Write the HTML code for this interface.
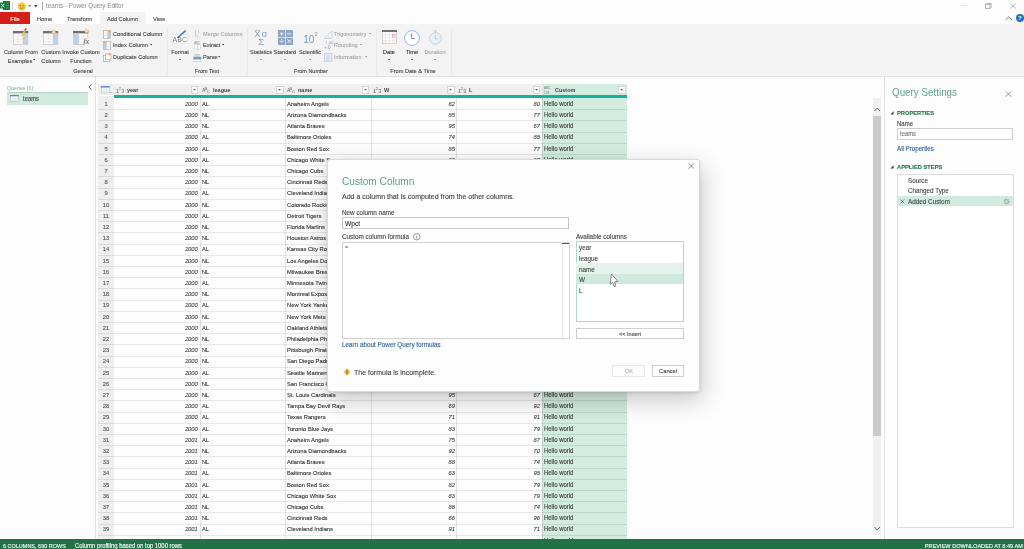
<!DOCTYPE html>
<html><head><meta charset="utf-8"><style>
html,body{margin:0;padding:0;width:1024px;height:549px;overflow:hidden;background:#fdfdfd}
body{position:relative;font-family:"Liberation Sans",sans-serif;-webkit-font-smoothing:antialiased}
#root{position:absolute;left:0;top:0;width:1024px;height:549px;will-change:transform}
div,span,svg{position:absolute}
.t{white-space:nowrap;display:block;-webkit-text-stroke:0.12px currentColor}
</style></head><body><div id="root">
<div style="left:0px;top:0px;width:1024px;height:12px;background:#fdfdfd"></div>
<svg style="position:absolute;left:0px;top:1px" width="10" height="9" viewBox="0 0 10 9"><rect x="3" y="0" width="7" height="9" fill="#1d6f42"/><rect x="0" y="1.5" width="5.5" height="6" fill="#107c41"/><path d="M1.2 2.8 L4.3 6.4 M4.3 2.8 L1.2 6.4" stroke="#fff" stroke-width="0.9"/><path d="M6 2h3M6 4.5h3M6 7h3" stroke="#5fb98a" stroke-width="0.6"/></svg>
<div style="left:11.5px;top:2px;width:0.6px;height:8px;background:#d6d6d6"></div>
<svg style="position:absolute;left:17px;top:2px" width="10" height="9" viewBox="0 0 10 9"><circle cx="4.8" cy="4.5" r="4.2" fill="#f5c842"/><circle cx="3.5" cy="3.6" r="0.6" fill="#6b5a1e"/><circle cx="6.2" cy="3.6" r="0.6" fill="#6b5a1e"/><path d="M3 5.8 Q4.8 7.2 6.6 5.8" stroke="#6b5a1e" stroke-width="0.6" fill="none"/></svg>
<svg style="position:absolute;left:27.5px;top:5px" width="3" height="2" viewBox="0 0 3 2"><path d="M0 0h3L1.5 2z" fill="#3a9a5a"/></svg>
<svg style="position:absolute;left:34px;top:5px" width="4" height="3" viewBox="0 0 4 3"><path d="M0 0h3.4L1.7 2.4z" fill="#444"/></svg>
<div style="left:42px;top:2px;width:0.7px;height:8px;background:#9aa9c0"></div>
<span class="t" style="left:46px;top:2.455px;font-size:6.3px;line-height:7px;color:#8c8c8c;-webkit-text-stroke:0;font-size:6.74px;transform:scaleX(0.9346);transform-origin:0 50%">teams - Power Query Editor</span>
<div style="left:961px;top:5px;width:6px;height:0.5px;background:#e2e2e2"></div>
<svg style="position:absolute;left:985px;top:3px" width="7" height="6" viewBox="0 0 7 6"><rect x="0.4" y="1.6" width="4.6" height="4" fill="none" stroke="#999" stroke-width="0.7"/><path d="M1.6 1.2V0.4H6.2V4.6H5.4" fill="none" stroke="#999" stroke-width="0.7"/></svg>
<svg style="position:absolute;left:1010px;top:3px" width="7" height="6" viewBox="0 0 7 6"><path d="M0.5 0.5L6 5.5M6 0.5L0.5 5.5" stroke="#999" stroke-width="0.7"/></svg>
<div style="left:0px;top:12px;width:1024px;height:12px;background:#fdfdfd"></div>
<div style="left:0px;top:12px;width:30px;height:12px;background:#d4201b"></div>
<span class="t" style="left:-85px;width:200px;text-align:center;top:14.722px;font-size:6.206px;line-height:7px;transform:scaleX(0.9346);transform-origin:50% 50%;color:#fff;">File</span>
<span class="t" style="left:37px;top:14.883px;font-size:6.099px;line-height:7px;transform:scaleX(0.9346);transform-origin:0 50%;color:#444;">Home</span>
<span class="t" style="left:67px;top:15.845px;font-size:5.992px;line-height:6px;transform:scaleX(0.9346);transform-origin:0 50%;color:#444;">Transform</span>
<div style="left:100px;top:12px;width:45.5px;height:13px;background:#f4f3f3"></div>
<span class="t" style="left:107px;top:15.864px;font-size:6.046px;line-height:6px;transform:scaleX(0.9346);transform-origin:0 50%;color:#444;">Add Column</span>
<span class="t" style="left:153px;top:14.883px;font-size:6.099px;line-height:7px;transform:scaleX(0.9346);transform-origin:0 50%;color:#444;">View</span>
<svg style="position:absolute;left:1005px;top:16px" width="8" height="5" viewBox="0 0 8 5"><path d="M0.5 4L3.8 0.8L7 4" fill="none" stroke="#666" stroke-width="0.8"/></svg>
<svg style="position:absolute;left:1016px;top:14px" width="8" height="8" viewBox="0 0 8 8"><circle cx="4" cy="4" r="4" fill="#1f6fbf"/><text x="4" y="6.3" font-size="6.2" text-anchor="middle" fill="#fff" font-family="Liberation Sans" font-weight="bold">?</text></svg>
<div style="left:0px;top:24px;width:1024px;height:52px;background:#f4f3f3"></div>
<div style="left:0px;top:75.5px;width:1024px;height:1px;background:#e4e2e0"></div>
<div style="left:166.5px;top:28px;width:0.6px;height:46px;background:#ebe9e7"></div>
<div style="left:247px;top:28px;width:0.6px;height:46px;background:#ebe9e7"></div>
<div style="left:376px;top:28px;width:0.6px;height:46px;background:#ebe9e7"></div>
<div style="left:450.5px;top:28px;width:0.6px;height:46px;background:#ebe9e7"></div>
<div style="left:98.5px;top:28px;width:0.6px;height:44px;background:#f3f2f1"></div>
<svg style="position:absolute;left:13.4px;top:27.8px" width="17" height="17" viewBox="0 0 17 17"><g transform="translate(0,3)"><rect x="0.35" y="0.35" width="14.5" height="13.2" fill="#fff" stroke="#b4b4b4" stroke-width="0.6"/><rect x="0" y="0" width="15.2" height="2.4" fill="#6f6f6f"/><rect x="10" y="2.4" width="4.85" height="11.15" fill="#bcd0e6"/><path d="M0.4 5.3H14.8M0.4 8.1H14.8M0.4 10.9H14.8M5.2 2.4V13.5M10 2.4V13.5" stroke="#d2d2d2" stroke-width="0.5"/></g><path d="M12.2 0.5 L8 8 L10.6 8 L7.2 13.5 L13.2 6.3 L10.8 6.3 L13.8 0.5z" fill="#f5c65a"/><path d="M12.2 0.5 L11 2.6 L13 2.6 L13.8 0.5z" fill="#e05050"/></svg>
<span class="t" style="left:-79px;width:200px;text-align:center;top:49.445px;font-size:5.992px;line-height:6px;transform:scaleX(0.9346);transform-origin:50% 50%;color:#444;">Column From</span>
<span class="t" style="left:-80.5px;width:200px;text-align:center;top:57.645px;font-size:5.992px;line-height:6px;transform:scaleX(0.9346);transform-origin:50% 50%;color:#444;">Examples</span>
<svg style="position:absolute;left:32.8px;top:59.2px" width="2.4" height="1.6" viewBox="0 0 2.4 1.6"><path d="M0 0h2.4L1.2 1.6z" fill="#444"/></svg>
<svg style="position:absolute;left:42.5px;top:27.8px" width="17" height="17" viewBox="0 0 17 17"><g transform="translate(0,3)"><rect x="0.35" y="0.35" width="14.5" height="13.2" fill="#fff" stroke="#b4b4b4" stroke-width="0.6"/><rect x="0" y="0" width="15.2" height="2.4" fill="#6f6f6f"/><rect x="10" y="2.4" width="4.85" height="11.15" fill="#bcd0e6"/><path d="M0.4 5.3H14.8M0.4 8.1H14.8M0.4 10.9H14.8M5.2 2.4V13.5M10 2.4V13.5" stroke="#d2d2d2" stroke-width="0.5"/></g><circle cx="10.8" cy="4.2" r="1.6" fill="#fbe3c2" stroke="#f0a850" stroke-width="0.6"/><path d="M12.72 4.20L13.84 4.20M12.16 5.56L12.95 6.35M10.80 6.12L10.80 7.24M9.44 5.56L8.65 6.35M8.88 4.20L7.76 4.20M9.44 2.84L8.65 2.05M10.80 2.28L10.80 1.16M12.16 2.84L12.95 2.05" stroke="#f0a850" stroke-width="0.5"/></svg>
<span class="t" style="left:-49.5px;width:200px;text-align:center;top:49.445px;font-size:5.992px;line-height:6px;transform:scaleX(0.9346);transform-origin:50% 50%;color:#444;">Custom</span>
<span class="t" style="left:-49.5px;width:200px;text-align:center;top:57.645px;font-size:5.992px;line-height:6px;transform:scaleX(0.9346);transform-origin:50% 50%;color:#444;">Column</span>
<svg style="position:absolute;left:72.5px;top:27.8px" width="17" height="17" viewBox="0 0 17 17"><g transform="translate(0,3)"><rect x="0.35" y="0.35" width="14.5" height="13.2" fill="#fff" stroke="#b4b4b4" stroke-width="0.6"/><rect x="0" y="0" width="15.2" height="2.4" fill="#6f6f6f"/><rect x="0.35" y="2.4" width="5.6" height="11.15" fill="#bcd0e6"/><path d="M0.4 5.3H14.8M0.4 8.1H14.8M0.4 10.9H14.8M5.2 2.4V13.5M10 2.4V13.5" stroke="#d2d2d2" stroke-width="0.5"/></g><circle cx="13.6" cy="3.2" r="1.6" fill="#fbe3c2" stroke="#f0a850" stroke-width="0.6"/><path d="M15.52 3.20L16.64 3.20M14.96 4.56L15.75 5.35M13.60 5.12L13.60 6.24M12.24 4.56L11.45 5.35M11.68 3.20L10.56 3.20M12.24 1.84L11.45 1.05M13.60 1.28L13.60 0.16M14.96 1.84L15.75 1.05" stroke="#f0a850" stroke-width="0.5"/><rect x="10.5" y="10" width="6" height="7" fill="#f3f2f1"/><text x="10.2" y="16.3" font-size="8.5" font-style="italic" fill="#555" font-family="Liberation Serif">fx</text></svg>
<span class="t" style="left:-19px;width:200px;text-align:center;top:49.445px;font-size:5.992px;line-height:6px;transform:scaleX(0.9346);transform-origin:50% 50%;color:#444;">Invoke Custom</span>
<span class="t" style="left:-19px;width:200px;text-align:center;top:57.645px;font-size:5.992px;line-height:6px;transform:scaleX(0.9346);transform-origin:50% 50%;color:#444;">Function</span>
<span class="t" style="left:-17px;width:200px;text-align:center;top:68.107px;font-size:5.885px;line-height:6px;transform:scaleX(0.9346);transform-origin:50% 50%;color:#444;">General</span>
<svg style="position:absolute;left:102.5px;top:29.5px" width="9" height="9" viewBox="0 0 9 9"><rect x="0.5" y="0.5" width="7" height="8" fill="#fff" stroke="#999" stroke-width="0.6"/><path d="M0.5 3H7.5M0.5 5.5H7.5M4 0.5V8.5" stroke="#ccc" stroke-width="0.5"/><rect x="4.5" y="1" width="3" height="7" fill="#b9cde3"/><circle cx="6.5" cy="1.5" r="1.4" fill="#f0b070"/></svg>
<span class="t" style="left:112.5px;top:30.868px;font-size:6.056px;line-height:6px;transform:scaleX(0.9346);transform-origin:0 50%;color:#444;">Conditional Column</span>
<svg style="position:absolute;left:102.5px;top:41px" width="9" height="9" viewBox="0 0 9 9"><rect x="0.5" y="0.5" width="7" height="8" fill="#fff" stroke="#999" stroke-width="0.6"/><path d="M0.5 3H7.5M0.5 5.5H7.5M4 0.5V8.5" stroke="#ccc" stroke-width="0.5"/><rect x="0.5" y="0.5" width="3" height="8" fill="#b9cde3"/><circle cx="2" cy="1.5" r="1.3" fill="#f0b070"/></svg>
<span class="t" style="left:112.5px;top:42.468px;font-size:6.056px;line-height:6px;transform:scaleX(0.9346);transform-origin:0 50%;color:#444;">Index Column</span>
<svg style="position:absolute;left:149.8px;top:44.1px" width="2.4" height="1.6" viewBox="0 0 2.4 1.6"><path d="M0 0h2.4L1.2 1.6z" fill="#444"/></svg>
<svg style="position:absolute;left:102.5px;top:53px" width="9" height="9" viewBox="0 0 9 9"><rect x="0.5" y="2.5" width="6" height="6" fill="#fff" stroke="#999" stroke-width="0.6"/><rect x="2.5" y="0.8" width="5.5" height="6" fill="#fff" stroke="#999" stroke-width="0.6"/><circle cx="6.5" cy="1.2" r="1.2" fill="#f0b070"/></svg>
<span class="t" style="left:112.5px;top:54.368px;font-size:6.056px;line-height:6px;transform:scaleX(0.9346);transform-origin:0 50%;color:#444;">Duplicate Column</span>
<svg style="position:absolute;left:171px;top:28.5px" width="18" height="15" viewBox="0 0 18 15"><rect x="1" y="5.3" width="15.7" height="8.6" fill="#fff" stroke="#9a9a9a" stroke-width="0.45" stroke-dasharray="0.8 0.8"/><text x="8.8" y="12.6" font-size="7" text-anchor="middle" fill="#777" font-family="Liberation Sans">ABC</text><path d="M7.2 8.2 L14.6 1.6" stroke="#3a78c0" stroke-width="1.5"/><path d="M6.6 8.8 L7.6 7.8" stroke="#1f4f8a" stroke-width="1.5"/></svg>
<span class="t" style="left:79.5px;width:200px;text-align:center;top:49.445px;font-size:5.992px;line-height:6px;transform:scaleX(0.9346);transform-origin:50% 50%;color:#444;">Format</span>
<svg style="position:absolute;left:178.60000000000002px;top:58.6px" width="2.4" height="1.6" viewBox="0 0 2.4 1.6"><path d="M0 0h2.4L1.2 1.6z" fill="#444"/></svg>
<svg style="position:absolute;left:193px;top:29px" width="10" height="9" viewBox="0 0 10 9"><path d="M2.5 1v6.5M5.5 0.5v4M4 5.5v2.5" fill="none" stroke="#c5d3e2" stroke-width="1.1"/><path d="M1 8.2h6.5" stroke="#dde5ee" stroke-width="0.8"/></svg>
<span class="t" style="left:202.8px;top:30.845px;font-size:5.992px;line-height:6px;transform:scaleX(0.9346);transform-origin:0 50%;color:#a8a8a8;">Merge Columns</span>
<svg style="position:absolute;left:193.5px;top:40.5px" width="9" height="9" viewBox="0 0 9 9"><text x="0.3" y="2.6" font-size="2.8" fill="#888" font-family="Liberation Sans">ABC</text><rect x="0.6" y="3.6" width="6" height="4.6" fill="#fff" stroke="#9a9a9a" stroke-width="0.45" stroke-dasharray="0.7 0.5"/><path d="M3.6 3.6v4.6" stroke="#9a9a9a" stroke-width="0.45"/></svg>
<span class="t" style="left:202.8px;top:42.445px;font-size:5.992px;line-height:6px;transform:scaleX(0.9346);transform-origin:0 50%;color:#444;">Extract</span>
<svg style="position:absolute;left:222.20000000000002px;top:44.1px" width="2.4" height="1.6" viewBox="0 0 2.4 1.6"><path d="M0 0h2.4L1.2 1.6z" fill="#444"/></svg>
<svg style="position:absolute;left:193px;top:52.5px" width="10" height="9" viewBox="0 0 10 9"><path d="M1.5 1.5h5M1 3h6" stroke="#9a9a9a" stroke-width="0.5"/><rect x="0.3" y="3.8" width="8.2" height="2.4" fill="#6f9bcf"/><rect x="1" y="6.4" width="6.8" height="2.2" fill="#fff" stroke="#aaa" stroke-width="0.45"/></svg>
<span class="t" style="left:202.8px;top:54.345px;font-size:5.992px;line-height:6px;transform:scaleX(0.9346);transform-origin:0 50%;color:#444;">Parse</span>
<svg style="position:absolute;left:218.3px;top:56.0px" width="2.4" height="1.6" viewBox="0 0 2.4 1.6"><path d="M0 0h2.4L1.2 1.6z" fill="#444"/></svg>
<span class="t" style="left:106.80000000000001px;width:200px;text-align:center;top:68.107px;font-size:5.885px;line-height:6px;transform:scaleX(0.9346);transform-origin:50% 50%;color:#444;">From Text</span>
<svg style="position:absolute;left:254px;top:29px" width="16" height="17" viewBox="0 0 16 17"><text x="0.2" y="8.3" font-size="9.4" fill="#87a0bf" font-family="Liberation Sans">X</text><text x="7.6" y="8.3" font-size="9.4" fill="#87a0bf" font-family="Liberation Sans">σ</text><path d="M0.8 1.3h5.4" stroke="#87a0bf" stroke-width="0.6"/><text x="7.2" y="16" font-size="9.2" text-anchor="middle" fill="#87a0bf" font-family="Liberation Sans">Σ</text></svg>
<span class="t" style="left:161.3px;width:200px;text-align:center;top:49.407px;font-size:5.885px;line-height:6px;transform:scaleX(0.9346);transform-origin:50% 50%;color:#444;">Statistics</span>
<svg style="position:absolute;left:260.0px;top:58.6px" width="2.4" height="1.6" viewBox="0 0 2.4 1.6"><path d="M0 0h2.4L1.2 1.6z" fill="#7d96b5"/></svg>
<svg style="position:absolute;left:278px;top:30px" width="15" height="15" viewBox="0 0 15 15"><rect x="0" y="0" width="15" height="15" fill="#8ea6c4"/><path d="M7.5 0V15M0 7.5H15" stroke="#e8ecf2" stroke-width="0.8"/><path d="M1.8 3.8h3.8M3.7 1.9v3.8M9.2 3.8h4M1.8 11.2h3.8M9.6 9.4l3.6 3.6M13.2 9.4l-3.6 3.6" stroke="#fff" stroke-width="0.8"/><circle cx="3.7" cy="9.6" r="0.5" fill="#fff"/><circle cx="3.7" cy="12.8" r="0.5" fill="#fff"/></svg>
<span class="t" style="left:185.3px;width:200px;text-align:center;top:49.407px;font-size:5.885px;line-height:6px;transform:scaleX(0.9346);transform-origin:50% 50%;color:#444;">Standard</span>
<svg style="position:absolute;left:284.1px;top:58.6px" width="2.4" height="1.6" viewBox="0 0 2.4 1.6"><path d="M0 0h2.4L1.2 1.6z" fill="#7d96b5"/></svg>
<svg style="position:absolute;left:303px;top:30px" width="16" height="14" viewBox="0 0 16 14"><text x="0.2" y="12.7" font-size="10" fill="#7d96b5" font-family="Liberation Sans">10</text><text x="11.6" y="6.4" font-size="5.4" fill="#7d96b5" font-family="Liberation Sans">2</text></svg>
<span class="t" style="left:209.8px;width:200px;text-align:center;top:49.407px;font-size:5.885px;line-height:6px;transform:scaleX(0.9346);transform-origin:50% 50%;color:#444;">Scientific</span>
<svg style="position:absolute;left:308.6px;top:58.6px" width="2.4" height="1.6" viewBox="0 0 2.4 1.6"><path d="M0 0h2.4L1.2 1.6z" fill="#7d96b5"/></svg>
<svg style="position:absolute;left:324px;top:29.5px" width="9" height="9" viewBox="0 0 9 9"><path d="M0.5 8.5L8 1V8.5z" fill="none" stroke="#bfcbd8" stroke-width="0.7"/><path d="M5 8.5 A3 3 0 0 0 4 6" fill="none" stroke="#bfcbd8" stroke-width="0.6"/></svg>
<span class="t" style="left:334px;top:30.807px;font-size:5.885px;line-height:6px;transform:scaleX(0.9346);transform-origin:0 50%;color:#a8a8a8;">Trigonometry</span>
<svg style="position:absolute;left:368.8px;top:32.6px" width="2.4" height="1.6" viewBox="0 0 2.4 1.6"><path d="M0 0h2.4L1.2 1.6z" fill="#8aa0bb"/></svg>
<svg style="position:absolute;left:323.5px;top:40px" width="10" height="10" viewBox="0 0 10 10"><text x="4" y="4" font-size="4" fill="#8aa0bb" font-family="Liberation Sans">.00</text><text x="0" y="9.3" font-size="4.6" fill="#8aa0bb" font-family="Liberation Sans">+.0</text><path d="M2.5 1v3" stroke="#e8a070" stroke-width="0.5"/></svg>
<span class="t" style="left:334px;top:42.407px;font-size:5.885px;line-height:6px;transform:scaleX(0.9346);transform-origin:0 50%;color:#a8a8a8;">Rounding</span>
<svg style="position:absolute;left:359.8px;top:43.900000000000006px" width="2.4" height="1.6" viewBox="0 0 2.4 1.6"><path d="M0 0h2.4L1.2 1.6z" fill="#8aa0bb"/></svg>
<svg style="position:absolute;left:324px;top:53px" width="9" height="9" viewBox="0 0 9 9"><rect x="0.5" y="0.5" width="7.5" height="8" fill="#e4ebf3" stroke="#a9bbd0" stroke-width="0.5"/><path d="M2 3h4M2 5h4M2 7h3" stroke="#a9bbd0" stroke-width="0.5"/></svg>
<span class="t" style="left:334px;top:54.307px;font-size:5.885px;line-height:6px;transform:scaleX(0.9346);transform-origin:0 50%;color:#a8a8a8;">Information</span>
<svg style="position:absolute;left:365.2px;top:55.900000000000006px" width="2.4" height="1.6" viewBox="0 0 2.4 1.6"><path d="M0 0h2.4L1.2 1.6z" fill="#8aa0bb"/></svg>
<span class="t" style="left:211px;width:200px;text-align:center;top:68.107px;font-size:5.885px;line-height:6px;transform:scaleX(0.9346);transform-origin:50% 50%;color:#444;">From Number</span>
<svg style="position:absolute;left:382px;top:30px" width="15" height="14" viewBox="0 0 15 14"><rect x="0.3" y="0.3" width="14.4" height="13.4" fill="#fff" stroke="#aaa" stroke-width="0.5"/><rect x="0" y="0" width="15" height="2" fill="#707070"/><path d="M0 5H15M0 7.8H15M0 10.6H15M3.6 2V14M7.2 2V14M10.8 2V14" stroke="#d0d0d0" stroke-width="0.45"/><path d="M10.5 4.5 h2.5v2.5h-2.5z" fill="none" stroke="#e07070" stroke-width="0.5"/></svg>
<span class="t" style="left:289.3px;width:200px;text-align:center;top:49.445px;font-size:5.992px;line-height:6px;transform:scaleX(0.9346);transform-origin:50% 50%;color:#333;">Date</span>
<svg style="position:absolute;left:387.8px;top:58.6px" width="2.4" height="1.6" viewBox="0 0 2.4 1.6"><path d="M0 0h2.4L1.2 1.6z" fill="#333"/></svg>
<svg style="position:absolute;left:404px;top:29.5px" width="16" height="16" viewBox="0 0 16 16"><circle cx="8" cy="8" r="7.4" fill="#fff" stroke="#7aa5d6" stroke-width="0.8"/><path d="M7.6 3.4V8.4H11" fill="none" stroke="#555" stroke-width="0.7"/></svg>
<span class="t" style="left:312px;width:200px;text-align:center;top:49.445px;font-size:5.992px;line-height:6px;transform:scaleX(0.9346);transform-origin:50% 50%;color:#333;">Time</span>
<svg style="position:absolute;left:410.7px;top:58.6px" width="2.4" height="1.6" viewBox="0 0 2.4 1.6"><path d="M0 0h2.4L1.2 1.6z" fill="#333"/></svg>
<svg style="position:absolute;left:429px;top:30px" width="13" height="15" viewBox="0 0 13 15"><circle cx="6.5" cy="8.5" r="5.8" fill="#e8f0f8" stroke="#b3c8df" stroke-width="0.7"/><path d="M5 0.8h3M6.5 1v1.5M6.4 5v3.8h2.4" fill="none" stroke="#9fb4cc" stroke-width="0.6"/></svg>
<span class="t" style="left:335.2px;width:200px;text-align:center;top:49.445px;font-size:5.992px;line-height:6px;transform:scaleX(0.9346);transform-origin:50% 50%;color:#a8a8a8;">Duration</span>
<svg style="position:absolute;left:433.6px;top:58.6px" width="2.4" height="1.6" viewBox="0 0 2.4 1.6"><path d="M0 0h2.4L1.2 1.6z" fill="#7d96b5"/></svg>
<span class="t" style="left:312.6px;width:200px;text-align:center;top:68.145px;font-size:5.992px;line-height:6px;transform:scaleX(0.9346);transform-origin:50% 50%;color:#444;">From Date &amp; Time</span>
<div style="left:0px;top:76.5px;width:1024px;height:462.5px;background:#fdfdfd"></div>
<div style="left:95.3px;top:76.5px;width:0.8px;height:462.5px;background:#e3e3e3"></div>
<span class="t" style="left:7px;top:84.930px;font-size:5.671px;line-height:6px;transform:scaleX(0.9346);transform-origin:0 50%;color:#72ae97;-webkit-text-stroke:0">Queries [1]</span>
<svg style="position:absolute;left:88px;top:84px" width="4" height="6" viewBox="0 0 4 6"><path d="M3.4 0.4L0.9 3L3.4 5.6" fill="none" stroke="#555" stroke-width="1"/></svg>
<div style="left:7px;top:91.6px;width:81px;height:13.2px;background:#d1ecdf;border-top:0.6px solid #b8cfc3;box-sizing:border-box"></div>
<svg style="position:absolute;left:10px;top:95px" width="9" height="7" viewBox="0 0 9 7"><rect x="0.3" y="0.3" width="8" height="6.4" fill="#fff" stroke="#999" stroke-width="0.45"/><rect x="0" y="0" width="8.6" height="1.3" fill="#4f86c6"/><path d="M0 3.2H8.5M0 5H8.5M3 1.3V7M5.6 1.3V7" stroke="#ccc" stroke-width="0.4"/></svg>
<span class="t" style="left:23px;top:95.160px;font-size:6.313px;line-height:7px;transform:scaleX(0.9346);transform-origin:0 50%;color:#444;">teams</span>
<div style="left:98px;top:84.2px;width:529px;height:11.3px;background:#efefef"></div>
<div style="left:98px;top:95.5px;width:16px;height:444px;background:#efefef"></div>
<div style="left:541.5px;top:84.2px;width:85.5px;height:11.3px;background:#d2ecdf"></div>
<div style="left:114px;top:95.4px;width:513px;height:2.6px;background:#14b29a"></div>
<svg style="position:absolute;left:101px;top:86px" width="11" height="8" viewBox="0 0 11 8"><rect x="0.3" y="0.3" width="8" height="6.6" fill="#fff" stroke="#aaa" stroke-width="0.45"/><rect x="0" y="0" width="8.6" height="1.6" fill="#5b8fd0"/><path d="M0 3.6H8M0 5.3H8M2.8 1.6V7M5.5 1.6V7" stroke="#ccc" stroke-width="0.4"/><path d="M9 6.2h1.6L9.8 7.2z" fill="#555"/></svg>
<svg style="position:absolute;left:116px;top:86px" width="9" height="8" viewBox="0 0 9 8"><text x="0" y="7" font-size="5.6" fill="#666" font-family="Liberation Sans">1</text><text x="2.5" y="3.6" font-size="4.4" fill="#666" font-family="Liberation Sans">2</text><text x="5.3" y="7" font-size="5.4" fill="#666" font-family="Liberation Sans">3</text></svg>
<span class="t" style="left:127px;top:87.007px;font-size:5.885px;line-height:6px;transform:scaleX(0.9346);transform-origin:0 50%;color:#444;font-weight:bold;-webkit-text-stroke:0">year</span>
<div style="left:190.5px;top:86px;width:7.5px;height:8px;background:#fff;border:0.5px solid #d6d6d6;box-sizing:border-box"></div>
<svg style="position:absolute;left:192.9px;top:89.4px" width="3" height="2" viewBox="0 0 3 2"><path d="M0 0h3L1.5 1.8z" fill="#666"/></svg>
<svg style="position:absolute;left:201.5px;top:86px" width="9" height="8" viewBox="0 0 9 8"><text x="0" y="5.7" font-size="5.2" fill="#666" font-family="Liberation Sans">A</text><text x="2.5" y="3.5" font-size="3.9" fill="#666" font-family="Liberation Sans">B</text><text x="5" y="7" font-size="4.4" fill="#666" font-family="Liberation Sans">C</text></svg>
<span class="t" style="left:212.5px;top:87.007px;font-size:5.885px;line-height:6px;transform:scaleX(0.9346);transform-origin:0 50%;color:#444;font-weight:bold;-webkit-text-stroke:0">league</span>
<div style="left:276px;top:86px;width:7.5px;height:8px;background:#fff;border:0.5px solid #d6d6d6;box-sizing:border-box"></div>
<svg style="position:absolute;left:278.4px;top:89.4px" width="3" height="2" viewBox="0 0 3 2"><path d="M0 0h3L1.5 1.8z" fill="#666"/></svg>
<svg style="position:absolute;left:287px;top:86px" width="9" height="8" viewBox="0 0 9 8"><text x="0" y="5.7" font-size="5.2" fill="#666" font-family="Liberation Sans">A</text><text x="2.5" y="3.5" font-size="3.9" fill="#666" font-family="Liberation Sans">B</text><text x="5" y="7" font-size="4.4" fill="#666" font-family="Liberation Sans">C</text></svg>
<span class="t" style="left:298px;top:87.007px;font-size:5.885px;line-height:6px;transform:scaleX(0.9346);transform-origin:0 50%;color:#444;font-weight:bold;-webkit-text-stroke:0">name</span>
<div style="left:361.5px;top:86px;width:7.5px;height:8px;background:#fff;border:0.5px solid #d6d6d6;box-sizing:border-box"></div>
<svg style="position:absolute;left:363.9px;top:89.4px" width="3" height="2" viewBox="0 0 3 2"><path d="M0 0h3L1.5 1.8z" fill="#666"/></svg>
<svg style="position:absolute;left:372.5px;top:86px" width="9" height="8" viewBox="0 0 9 8"><text x="0" y="7" font-size="5.6" fill="#666" font-family="Liberation Sans">1</text><text x="2.5" y="3.6" font-size="4.4" fill="#666" font-family="Liberation Sans">2</text><text x="5.3" y="7" font-size="5.4" fill="#666" font-family="Liberation Sans">3</text></svg>
<span class="t" style="left:383.5px;top:87.007px;font-size:5.885px;line-height:6px;transform:scaleX(0.9346);transform-origin:0 50%;color:#444;font-weight:bold;-webkit-text-stroke:0">W</span>
<div style="left:447px;top:86px;width:7.5px;height:8px;background:#fff;border:0.5px solid #d6d6d6;box-sizing:border-box"></div>
<svg style="position:absolute;left:449.4px;top:89.4px" width="3" height="2" viewBox="0 0 3 2"><path d="M0 0h3L1.5 1.8z" fill="#666"/></svg>
<svg style="position:absolute;left:458px;top:86px" width="9" height="8" viewBox="0 0 9 8"><text x="0" y="7" font-size="5.6" fill="#666" font-family="Liberation Sans">1</text><text x="2.5" y="3.6" font-size="4.4" fill="#666" font-family="Liberation Sans">2</text><text x="5.3" y="7" font-size="5.4" fill="#666" font-family="Liberation Sans">3</text></svg>
<span class="t" style="left:469px;top:87.007px;font-size:5.885px;line-height:6px;transform:scaleX(0.9346);transform-origin:0 50%;color:#444;font-weight:bold;-webkit-text-stroke:0">L</span>
<div style="left:532.5px;top:86px;width:7.5px;height:8px;background:#fff;border:0.5px solid #d6d6d6;box-sizing:border-box"></div>
<svg style="position:absolute;left:534.9px;top:89.4px" width="3" height="2" viewBox="0 0 3 2"><path d="M0 0h3L1.5 1.8z" fill="#666"/></svg>
<svg style="position:absolute;left:543.5px;top:86.3px" width="9" height="8" viewBox="0 0 9 8"><text x="0" y="3.2" font-size="3.2" fill="#777" font-family="Liberation Sans">ABC</text><text x="0" y="7.5" font-size="3.2" fill="#777" font-family="Liberation Sans">123</text></svg>
<span class="t" style="left:554.5px;top:87.007px;font-size:5.885px;line-height:6px;transform:scaleX(0.9346);transform-origin:0 50%;color:#444;font-weight:bold;-webkit-text-stroke:0">Custom</span>
<div style="left:618px;top:86px;width:7.5px;height:8px;background:#fff;border:0.5px solid #d6d6d6;box-sizing:border-box"></div>
<svg style="position:absolute;left:620.4px;top:89.4px" width="3" height="2" viewBox="0 0 3 2"><path d="M0 0h3L1.5 1.8z" fill="#666"/></svg>
<div style="left:541.5px;top:98px;width:85.5px;height:441px;background:#d2ecdf"></div>
<div style="left:199.5px;top:98px;width:0.7px;height:441px;background:rgba(0,0,0,0.1)"></div>
<div style="left:285px;top:98px;width:0.7px;height:441px;background:rgba(0,0,0,0.1)"></div>
<div style="left:370.5px;top:98px;width:0.7px;height:441px;background:rgba(0,0,0,0.1)"></div>
<div style="left:456px;top:98px;width:0.7px;height:441px;background:rgba(0,0,0,0.1)"></div>
<div style="left:541.5px;top:98px;width:0.7px;height:441px;background:rgba(0,0,0,0.1)"></div>
<div style="left:98px;top:109.10000000000001px;width:529px;height:0.6px;background:rgba(0,0,0,0.085)"></div>
<span class="t" style="left:6px;width:200px;text-align:center;top:99.822px;font-size:6.206px;line-height:7px;transform:scaleX(0.9346);transform-origin:50% 50%;color:#555;">1</span>
<span class="t" style="right:826px;top:99.822px;font-size:6.206px;line-height:7px;transform:scaleX(0.9346);transform-origin:100% 50%;color:#4a4a4a;font-style:italic">2000</span>
<span class="t" style="left:201.5px;top:100.745px;font-size:5.992px;line-height:6px;transform:scaleX(0.9346);transform-origin:0 50%;color:#333;">AL</span>
<span class="t" style="left:287px;top:99.822px;font-size:6.206px;line-height:7px;transform:scaleX(0.9346);transform-origin:0 50%;color:#333;">Anaheim Angels</span>
<span class="t" style="right:569.5px;top:99.822px;font-size:6.206px;line-height:7px;transform:scaleX(0.9346);transform-origin:100% 50%;color:#4a4a4a;font-style:italic">82</span>
<span class="t" style="right:484.0px;top:99.822px;font-size:6.206px;line-height:7px;transform:scaleX(0.9346);transform-origin:100% 50%;color:#4a4a4a;font-style:italic">80</span>
<span class="t" style="left:543.5px;top:99.879px;font-size:6.367px;line-height:7px;transform:scaleX(0.9346);transform-origin:0 50%;color:#3c3c3c;">Hello world</span>
<div style="left:98px;top:120.30000000000001px;width:529px;height:0.6px;background:rgba(0,0,0,0.085)"></div>
<span class="t" style="left:6px;width:200px;text-align:center;top:111.022px;font-size:6.206px;line-height:7px;transform:scaleX(0.9346);transform-origin:50% 50%;color:#555;">2</span>
<span class="t" style="right:826px;top:111.022px;font-size:6.206px;line-height:7px;transform:scaleX(0.9346);transform-origin:100% 50%;color:#4a4a4a;font-style:italic">2000</span>
<span class="t" style="left:201.5px;top:111.945px;font-size:5.992px;line-height:6px;transform:scaleX(0.9346);transform-origin:0 50%;color:#333;">NL</span>
<span class="t" style="left:287px;top:111.022px;font-size:6.206px;line-height:7px;transform:scaleX(0.9346);transform-origin:0 50%;color:#333;">Arizona Diamondbacks</span>
<span class="t" style="right:569.5px;top:111.022px;font-size:6.206px;line-height:7px;transform:scaleX(0.9346);transform-origin:100% 50%;color:#4a4a4a;font-style:italic">85</span>
<span class="t" style="right:484.0px;top:111.022px;font-size:6.206px;line-height:7px;transform:scaleX(0.9346);transform-origin:100% 50%;color:#4a4a4a;font-style:italic">77</span>
<span class="t" style="left:543.5px;top:111.079px;font-size:6.367px;line-height:7px;transform:scaleX(0.9346);transform-origin:0 50%;color:#3c3c3c;">Hello world</span>
<div style="left:98px;top:131.5px;width:529px;height:0.6px;background:rgba(0,0,0,0.085)"></div>
<span class="t" style="left:6px;width:200px;text-align:center;top:122.222px;font-size:6.206px;line-height:7px;transform:scaleX(0.9346);transform-origin:50% 50%;color:#555;">3</span>
<span class="t" style="right:826px;top:122.222px;font-size:6.206px;line-height:7px;transform:scaleX(0.9346);transform-origin:100% 50%;color:#4a4a4a;font-style:italic">2000</span>
<span class="t" style="left:201.5px;top:123.145px;font-size:5.992px;line-height:6px;transform:scaleX(0.9346);transform-origin:0 50%;color:#333;">NL</span>
<span class="t" style="left:287px;top:122.222px;font-size:6.206px;line-height:7px;transform:scaleX(0.9346);transform-origin:0 50%;color:#333;">Atlanta Braves</span>
<span class="t" style="right:569.5px;top:122.222px;font-size:6.206px;line-height:7px;transform:scaleX(0.9346);transform-origin:100% 50%;color:#4a4a4a;font-style:italic">95</span>
<span class="t" style="right:484.0px;top:122.222px;font-size:6.206px;line-height:7px;transform:scaleX(0.9346);transform-origin:100% 50%;color:#4a4a4a;font-style:italic">67</span>
<span class="t" style="left:543.5px;top:122.279px;font-size:6.367px;line-height:7px;transform:scaleX(0.9346);transform-origin:0 50%;color:#3c3c3c;">Hello world</span>
<div style="left:98px;top:142.7px;width:529px;height:0.6px;background:rgba(0,0,0,0.085)"></div>
<span class="t" style="left:6px;width:200px;text-align:center;top:133.422px;font-size:6.206px;line-height:7px;transform:scaleX(0.9346);transform-origin:50% 50%;color:#555;">4</span>
<span class="t" style="right:826px;top:133.422px;font-size:6.206px;line-height:7px;transform:scaleX(0.9346);transform-origin:100% 50%;color:#4a4a4a;font-style:italic">2000</span>
<span class="t" style="left:201.5px;top:134.345px;font-size:5.992px;line-height:6px;transform:scaleX(0.9346);transform-origin:0 50%;color:#333;">AL</span>
<span class="t" style="left:287px;top:133.422px;font-size:6.206px;line-height:7px;transform:scaleX(0.9346);transform-origin:0 50%;color:#333;">Baltimore Orioles</span>
<span class="t" style="right:569.5px;top:133.422px;font-size:6.206px;line-height:7px;transform:scaleX(0.9346);transform-origin:100% 50%;color:#4a4a4a;font-style:italic">74</span>
<span class="t" style="right:484.0px;top:133.422px;font-size:6.206px;line-height:7px;transform:scaleX(0.9346);transform-origin:100% 50%;color:#4a4a4a;font-style:italic">88</span>
<span class="t" style="left:543.5px;top:133.479px;font-size:6.367px;line-height:7px;transform:scaleX(0.9346);transform-origin:0 50%;color:#3c3c3c;">Hello world</span>
<div style="left:98px;top:153.9px;width:529px;height:0.6px;background:rgba(0,0,0,0.085)"></div>
<span class="t" style="left:6px;width:200px;text-align:center;top:144.622px;font-size:6.206px;line-height:7px;transform:scaleX(0.9346);transform-origin:50% 50%;color:#555;">5</span>
<span class="t" style="right:826px;top:144.622px;font-size:6.206px;line-height:7px;transform:scaleX(0.9346);transform-origin:100% 50%;color:#4a4a4a;font-style:italic">2000</span>
<span class="t" style="left:201.5px;top:145.545px;font-size:5.992px;line-height:6px;transform:scaleX(0.9346);transform-origin:0 50%;color:#333;">AL</span>
<span class="t" style="left:287px;top:144.622px;font-size:6.206px;line-height:7px;transform:scaleX(0.9346);transform-origin:0 50%;color:#333;">Boston Red Sox</span>
<span class="t" style="right:569.5px;top:144.622px;font-size:6.206px;line-height:7px;transform:scaleX(0.9346);transform-origin:100% 50%;color:#4a4a4a;font-style:italic">85</span>
<span class="t" style="right:484.0px;top:144.622px;font-size:6.206px;line-height:7px;transform:scaleX(0.9346);transform-origin:100% 50%;color:#4a4a4a;font-style:italic">77</span>
<span class="t" style="left:543.5px;top:144.679px;font-size:6.367px;line-height:7px;transform:scaleX(0.9346);transform-origin:0 50%;color:#3c3c3c;">Hello world</span>
<div style="left:98px;top:165.1px;width:529px;height:0.6px;background:rgba(0,0,0,0.085)"></div>
<span class="t" style="left:6px;width:200px;text-align:center;top:155.822px;font-size:6.206px;line-height:7px;transform:scaleX(0.9346);transform-origin:50% 50%;color:#555;">6</span>
<span class="t" style="right:826px;top:155.822px;font-size:6.206px;line-height:7px;transform:scaleX(0.9346);transform-origin:100% 50%;color:#4a4a4a;font-style:italic">2000</span>
<span class="t" style="left:201.5px;top:156.745px;font-size:5.992px;line-height:6px;transform:scaleX(0.9346);transform-origin:0 50%;color:#333;">AL</span>
<span class="t" style="left:287px;top:155.822px;font-size:6.206px;line-height:7px;transform:scaleX(0.9346);transform-origin:0 50%;color:#333;">Chicago White Sox</span>
<span class="t" style="right:569.5px;top:155.822px;font-size:6.206px;line-height:7px;transform:scaleX(0.9346);transform-origin:100% 50%;color:#4a4a4a;font-style:italic">95</span>
<span class="t" style="right:484.0px;top:155.822px;font-size:6.206px;line-height:7px;transform:scaleX(0.9346);transform-origin:100% 50%;color:#4a4a4a;font-style:italic">67</span>
<span class="t" style="left:543.5px;top:155.879px;font-size:6.367px;line-height:7px;transform:scaleX(0.9346);transform-origin:0 50%;color:#3c3c3c;">Hello world</span>
<div style="left:98px;top:176.29999999999998px;width:529px;height:0.6px;background:rgba(0,0,0,0.085)"></div>
<span class="t" style="left:6px;width:200px;text-align:center;top:167.022px;font-size:6.206px;line-height:7px;transform:scaleX(0.9346);transform-origin:50% 50%;color:#555;">7</span>
<span class="t" style="right:826px;top:167.022px;font-size:6.206px;line-height:7px;transform:scaleX(0.9346);transform-origin:100% 50%;color:#4a4a4a;font-style:italic">2000</span>
<span class="t" style="left:201.5px;top:167.945px;font-size:5.992px;line-height:6px;transform:scaleX(0.9346);transform-origin:0 50%;color:#333;">NL</span>
<span class="t" style="left:287px;top:167.022px;font-size:6.206px;line-height:7px;transform:scaleX(0.9346);transform-origin:0 50%;color:#333;">Chicago Cubs</span>
<span class="t" style="right:569.5px;top:167.022px;font-size:6.206px;line-height:7px;transform:scaleX(0.9346);transform-origin:100% 50%;color:#4a4a4a;font-style:italic">65</span>
<span class="t" style="right:484.0px;top:167.022px;font-size:6.206px;line-height:7px;transform:scaleX(0.9346);transform-origin:100% 50%;color:#4a4a4a;font-style:italic">97</span>
<span class="t" style="left:543.5px;top:167.079px;font-size:6.367px;line-height:7px;transform:scaleX(0.9346);transform-origin:0 50%;color:#3c3c3c;">Hello world</span>
<div style="left:98px;top:187.49999999999997px;width:529px;height:0.6px;background:rgba(0,0,0,0.085)"></div>
<span class="t" style="left:6px;width:200px;text-align:center;top:178.222px;font-size:6.206px;line-height:7px;transform:scaleX(0.9346);transform-origin:50% 50%;color:#555;">8</span>
<span class="t" style="right:826px;top:178.222px;font-size:6.206px;line-height:7px;transform:scaleX(0.9346);transform-origin:100% 50%;color:#4a4a4a;font-style:italic">2000</span>
<span class="t" style="left:201.5px;top:179.145px;font-size:5.992px;line-height:6px;transform:scaleX(0.9346);transform-origin:0 50%;color:#333;">NL</span>
<span class="t" style="left:287px;top:178.222px;font-size:6.206px;line-height:7px;transform:scaleX(0.9346);transform-origin:0 50%;color:#333;">Cincinnati Reds</span>
<span class="t" style="right:569.5px;top:178.222px;font-size:6.206px;line-height:7px;transform:scaleX(0.9346);transform-origin:100% 50%;color:#4a4a4a;font-style:italic">85</span>
<span class="t" style="right:484.0px;top:178.222px;font-size:6.206px;line-height:7px;transform:scaleX(0.9346);transform-origin:100% 50%;color:#4a4a4a;font-style:italic">77</span>
<span class="t" style="left:543.5px;top:178.279px;font-size:6.367px;line-height:7px;transform:scaleX(0.9346);transform-origin:0 50%;color:#3c3c3c;">Hello world</span>
<div style="left:98px;top:198.7px;width:529px;height:0.6px;background:rgba(0,0,0,0.085)"></div>
<span class="t" style="left:6px;width:200px;text-align:center;top:189.422px;font-size:6.206px;line-height:7px;transform:scaleX(0.9346);transform-origin:50% 50%;color:#555;">9</span>
<span class="t" style="right:826px;top:189.422px;font-size:6.206px;line-height:7px;transform:scaleX(0.9346);transform-origin:100% 50%;color:#4a4a4a;font-style:italic">2000</span>
<span class="t" style="left:201.5px;top:190.345px;font-size:5.992px;line-height:6px;transform:scaleX(0.9346);transform-origin:0 50%;color:#333;">AL</span>
<span class="t" style="left:287px;top:189.422px;font-size:6.206px;line-height:7px;transform:scaleX(0.9346);transform-origin:0 50%;color:#333;">Cleveland Indians</span>
<span class="t" style="right:569.5px;top:189.422px;font-size:6.206px;line-height:7px;transform:scaleX(0.9346);transform-origin:100% 50%;color:#4a4a4a;font-style:italic">90</span>
<span class="t" style="right:484.0px;top:189.422px;font-size:6.206px;line-height:7px;transform:scaleX(0.9346);transform-origin:100% 50%;color:#4a4a4a;font-style:italic">72</span>
<span class="t" style="left:543.5px;top:189.479px;font-size:6.367px;line-height:7px;transform:scaleX(0.9346);transform-origin:0 50%;color:#3c3c3c;">Hello world</span>
<div style="left:98px;top:209.9px;width:529px;height:0.6px;background:rgba(0,0,0,0.085)"></div>
<span class="t" style="left:6px;width:200px;text-align:center;top:200.622px;font-size:6.206px;line-height:7px;transform:scaleX(0.9346);transform-origin:50% 50%;color:#555;">10</span>
<span class="t" style="right:826px;top:200.622px;font-size:6.206px;line-height:7px;transform:scaleX(0.9346);transform-origin:100% 50%;color:#4a4a4a;font-style:italic">2000</span>
<span class="t" style="left:201.5px;top:201.545px;font-size:5.992px;line-height:6px;transform:scaleX(0.9346);transform-origin:0 50%;color:#333;">NL</span>
<span class="t" style="left:287px;top:200.622px;font-size:6.206px;line-height:7px;transform:scaleX(0.9346);transform-origin:0 50%;color:#333;">Colorado Rockies</span>
<span class="t" style="right:569.5px;top:200.622px;font-size:6.206px;line-height:7px;transform:scaleX(0.9346);transform-origin:100% 50%;color:#4a4a4a;font-style:italic">82</span>
<span class="t" style="right:484.0px;top:200.622px;font-size:6.206px;line-height:7px;transform:scaleX(0.9346);transform-origin:100% 50%;color:#4a4a4a;font-style:italic">80</span>
<span class="t" style="left:543.5px;top:200.679px;font-size:6.367px;line-height:7px;transform:scaleX(0.9346);transform-origin:0 50%;color:#3c3c3c;">Hello world</span>
<div style="left:98px;top:221.1px;width:529px;height:0.6px;background:rgba(0,0,0,0.085)"></div>
<span class="t" style="left:6px;width:200px;text-align:center;top:211.822px;font-size:6.206px;line-height:7px;transform:scaleX(0.9346);transform-origin:50% 50%;color:#555;">11</span>
<span class="t" style="right:826px;top:211.822px;font-size:6.206px;line-height:7px;transform:scaleX(0.9346);transform-origin:100% 50%;color:#4a4a4a;font-style:italic">2000</span>
<span class="t" style="left:201.5px;top:212.745px;font-size:5.992px;line-height:6px;transform:scaleX(0.9346);transform-origin:0 50%;color:#333;">AL</span>
<span class="t" style="left:287px;top:211.822px;font-size:6.206px;line-height:7px;transform:scaleX(0.9346);transform-origin:0 50%;color:#333;">Detroit Tigers</span>
<span class="t" style="right:569.5px;top:211.822px;font-size:6.206px;line-height:7px;transform:scaleX(0.9346);transform-origin:100% 50%;color:#4a4a4a;font-style:italic">79</span>
<span class="t" style="right:484.0px;top:211.822px;font-size:6.206px;line-height:7px;transform:scaleX(0.9346);transform-origin:100% 50%;color:#4a4a4a;font-style:italic">83</span>
<span class="t" style="left:543.5px;top:211.879px;font-size:6.367px;line-height:7px;transform:scaleX(0.9346);transform-origin:0 50%;color:#3c3c3c;">Hello world</span>
<div style="left:98px;top:232.29999999999998px;width:529px;height:0.6px;background:rgba(0,0,0,0.085)"></div>
<span class="t" style="left:6px;width:200px;text-align:center;top:223.022px;font-size:6.206px;line-height:7px;transform:scaleX(0.9346);transform-origin:50% 50%;color:#555;">12</span>
<span class="t" style="right:826px;top:223.022px;font-size:6.206px;line-height:7px;transform:scaleX(0.9346);transform-origin:100% 50%;color:#4a4a4a;font-style:italic">2000</span>
<span class="t" style="left:201.5px;top:223.945px;font-size:5.992px;line-height:6px;transform:scaleX(0.9346);transform-origin:0 50%;color:#333;">NL</span>
<span class="t" style="left:287px;top:223.022px;font-size:6.206px;line-height:7px;transform:scaleX(0.9346);transform-origin:0 50%;color:#333;">Florida Marlins</span>
<span class="t" style="right:569.5px;top:223.022px;font-size:6.206px;line-height:7px;transform:scaleX(0.9346);transform-origin:100% 50%;color:#4a4a4a;font-style:italic">79</span>
<span class="t" style="right:484.0px;top:223.022px;font-size:6.206px;line-height:7px;transform:scaleX(0.9346);transform-origin:100% 50%;color:#4a4a4a;font-style:italic">82</span>
<span class="t" style="left:543.5px;top:223.079px;font-size:6.367px;line-height:7px;transform:scaleX(0.9346);transform-origin:0 50%;color:#3c3c3c;">Hello world</span>
<div style="left:98px;top:243.49999999999997px;width:529px;height:0.6px;background:rgba(0,0,0,0.085)"></div>
<span class="t" style="left:6px;width:200px;text-align:center;top:234.222px;font-size:6.206px;line-height:7px;transform:scaleX(0.9346);transform-origin:50% 50%;color:#555;">13</span>
<span class="t" style="right:826px;top:234.222px;font-size:6.206px;line-height:7px;transform:scaleX(0.9346);transform-origin:100% 50%;color:#4a4a4a;font-style:italic">2000</span>
<span class="t" style="left:201.5px;top:235.145px;font-size:5.992px;line-height:6px;transform:scaleX(0.9346);transform-origin:0 50%;color:#333;">NL</span>
<span class="t" style="left:287px;top:234.222px;font-size:6.206px;line-height:7px;transform:scaleX(0.9346);transform-origin:0 50%;color:#333;">Houston Astros</span>
<span class="t" style="right:569.5px;top:234.222px;font-size:6.206px;line-height:7px;transform:scaleX(0.9346);transform-origin:100% 50%;color:#4a4a4a;font-style:italic">72</span>
<span class="t" style="right:484.0px;top:234.222px;font-size:6.206px;line-height:7px;transform:scaleX(0.9346);transform-origin:100% 50%;color:#4a4a4a;font-style:italic">90</span>
<span class="t" style="left:543.5px;top:234.279px;font-size:6.367px;line-height:7px;transform:scaleX(0.9346);transform-origin:0 50%;color:#3c3c3c;">Hello world</span>
<div style="left:98px;top:254.7px;width:529px;height:0.6px;background:rgba(0,0,0,0.085)"></div>
<span class="t" style="left:6px;width:200px;text-align:center;top:245.422px;font-size:6.206px;line-height:7px;transform:scaleX(0.9346);transform-origin:50% 50%;color:#555;">14</span>
<span class="t" style="right:826px;top:245.422px;font-size:6.206px;line-height:7px;transform:scaleX(0.9346);transform-origin:100% 50%;color:#4a4a4a;font-style:italic">2000</span>
<span class="t" style="left:201.5px;top:246.345px;font-size:5.992px;line-height:6px;transform:scaleX(0.9346);transform-origin:0 50%;color:#333;">AL</span>
<span class="t" style="left:287px;top:245.422px;font-size:6.206px;line-height:7px;transform:scaleX(0.9346);transform-origin:0 50%;color:#333;">Kansas City Royals</span>
<span class="t" style="right:569.5px;top:245.422px;font-size:6.206px;line-height:7px;transform:scaleX(0.9346);transform-origin:100% 50%;color:#4a4a4a;font-style:italic">77</span>
<span class="t" style="right:484.0px;top:245.422px;font-size:6.206px;line-height:7px;transform:scaleX(0.9346);transform-origin:100% 50%;color:#4a4a4a;font-style:italic">85</span>
<span class="t" style="left:543.5px;top:245.479px;font-size:6.367px;line-height:7px;transform:scaleX(0.9346);transform-origin:0 50%;color:#3c3c3c;">Hello world</span>
<div style="left:98px;top:265.9px;width:529px;height:0.6px;background:rgba(0,0,0,0.085)"></div>
<span class="t" style="left:6px;width:200px;text-align:center;top:256.622px;font-size:6.206px;line-height:7px;transform:scaleX(0.9346);transform-origin:50% 50%;color:#555;">15</span>
<span class="t" style="right:826px;top:256.622px;font-size:6.206px;line-height:7px;transform:scaleX(0.9346);transform-origin:100% 50%;color:#4a4a4a;font-style:italic">2000</span>
<span class="t" style="left:201.5px;top:257.545px;font-size:5.992px;line-height:6px;transform:scaleX(0.9346);transform-origin:0 50%;color:#333;">NL</span>
<span class="t" style="left:287px;top:256.622px;font-size:6.206px;line-height:7px;transform:scaleX(0.9346);transform-origin:0 50%;color:#333;">Los Angeles Dodgers</span>
<span class="t" style="right:569.5px;top:256.622px;font-size:6.206px;line-height:7px;transform:scaleX(0.9346);transform-origin:100% 50%;color:#4a4a4a;font-style:italic">86</span>
<span class="t" style="right:484.0px;top:256.622px;font-size:6.206px;line-height:7px;transform:scaleX(0.9346);transform-origin:100% 50%;color:#4a4a4a;font-style:italic">76</span>
<span class="t" style="left:543.5px;top:256.679px;font-size:6.367px;line-height:7px;transform:scaleX(0.9346);transform-origin:0 50%;color:#3c3c3c;">Hello world</span>
<div style="left:98px;top:277.09999999999997px;width:529px;height:0.6px;background:rgba(0,0,0,0.085)"></div>
<span class="t" style="left:6px;width:200px;text-align:center;top:267.822px;font-size:6.206px;line-height:7px;transform:scaleX(0.9346);transform-origin:50% 50%;color:#555;">16</span>
<span class="t" style="right:826px;top:267.822px;font-size:6.206px;line-height:7px;transform:scaleX(0.9346);transform-origin:100% 50%;color:#4a4a4a;font-style:italic">2000</span>
<span class="t" style="left:201.5px;top:268.745px;font-size:5.992px;line-height:6px;transform:scaleX(0.9346);transform-origin:0 50%;color:#333;">NL</span>
<span class="t" style="left:287px;top:267.822px;font-size:6.206px;line-height:7px;transform:scaleX(0.9346);transform-origin:0 50%;color:#333;">Milwaukee Brewers</span>
<span class="t" style="right:569.5px;top:267.822px;font-size:6.206px;line-height:7px;transform:scaleX(0.9346);transform-origin:100% 50%;color:#4a4a4a;font-style:italic">73</span>
<span class="t" style="right:484.0px;top:267.822px;font-size:6.206px;line-height:7px;transform:scaleX(0.9346);transform-origin:100% 50%;color:#4a4a4a;font-style:italic">89</span>
<span class="t" style="left:543.5px;top:267.879px;font-size:6.367px;line-height:7px;transform:scaleX(0.9346);transform-origin:0 50%;color:#3c3c3c;">Hello world</span>
<div style="left:98px;top:288.29999999999995px;width:529px;height:0.6px;background:rgba(0,0,0,0.085)"></div>
<span class="t" style="left:6px;width:200px;text-align:center;top:279.022px;font-size:6.206px;line-height:7px;transform:scaleX(0.9346);transform-origin:50% 50%;color:#555;">17</span>
<span class="t" style="right:826px;top:279.022px;font-size:6.206px;line-height:7px;transform:scaleX(0.9346);transform-origin:100% 50%;color:#4a4a4a;font-style:italic">2000</span>
<span class="t" style="left:201.5px;top:279.945px;font-size:5.992px;line-height:6px;transform:scaleX(0.9346);transform-origin:0 50%;color:#333;">AL</span>
<span class="t" style="left:287px;top:279.022px;font-size:6.206px;line-height:7px;transform:scaleX(0.9346);transform-origin:0 50%;color:#333;">Minnesota Twins</span>
<span class="t" style="right:569.5px;top:279.022px;font-size:6.206px;line-height:7px;transform:scaleX(0.9346);transform-origin:100% 50%;color:#4a4a4a;font-style:italic">69</span>
<span class="t" style="right:484.0px;top:279.022px;font-size:6.206px;line-height:7px;transform:scaleX(0.9346);transform-origin:100% 50%;color:#4a4a4a;font-style:italic">93</span>
<span class="t" style="left:543.5px;top:279.079px;font-size:6.367px;line-height:7px;transform:scaleX(0.9346);transform-origin:0 50%;color:#3c3c3c;">Hello world</span>
<div style="left:98px;top:299.49999999999994px;width:529px;height:0.6px;background:rgba(0,0,0,0.085)"></div>
<span class="t" style="left:6px;width:200px;text-align:center;top:290.222px;font-size:6.206px;line-height:7px;transform:scaleX(0.9346);transform-origin:50% 50%;color:#555;">18</span>
<span class="t" style="right:826px;top:290.222px;font-size:6.206px;line-height:7px;transform:scaleX(0.9346);transform-origin:100% 50%;color:#4a4a4a;font-style:italic">2000</span>
<span class="t" style="left:201.5px;top:291.145px;font-size:5.992px;line-height:6px;transform:scaleX(0.9346);transform-origin:0 50%;color:#333;">NL</span>
<span class="t" style="left:287px;top:290.222px;font-size:6.206px;line-height:7px;transform:scaleX(0.9346);transform-origin:0 50%;color:#333;">Montreal Expos</span>
<span class="t" style="right:569.5px;top:290.222px;font-size:6.206px;line-height:7px;transform:scaleX(0.9346);transform-origin:100% 50%;color:#4a4a4a;font-style:italic">67</span>
<span class="t" style="right:484.0px;top:290.222px;font-size:6.206px;line-height:7px;transform:scaleX(0.9346);transform-origin:100% 50%;color:#4a4a4a;font-style:italic">95</span>
<span class="t" style="left:543.5px;top:290.279px;font-size:6.367px;line-height:7px;transform:scaleX(0.9346);transform-origin:0 50%;color:#3c3c3c;">Hello world</span>
<div style="left:98px;top:310.7px;width:529px;height:0.6px;background:rgba(0,0,0,0.085)"></div>
<span class="t" style="left:6px;width:200px;text-align:center;top:301.422px;font-size:6.206px;line-height:7px;transform:scaleX(0.9346);transform-origin:50% 50%;color:#555;">19</span>
<span class="t" style="right:826px;top:301.422px;font-size:6.206px;line-height:7px;transform:scaleX(0.9346);transform-origin:100% 50%;color:#4a4a4a;font-style:italic">2000</span>
<span class="t" style="left:201.5px;top:302.345px;font-size:5.992px;line-height:6px;transform:scaleX(0.9346);transform-origin:0 50%;color:#333;">AL</span>
<span class="t" style="left:287px;top:301.422px;font-size:6.206px;line-height:7px;transform:scaleX(0.9346);transform-origin:0 50%;color:#333;">New York Yankees</span>
<span class="t" style="right:569.5px;top:301.422px;font-size:6.206px;line-height:7px;transform:scaleX(0.9346);transform-origin:100% 50%;color:#4a4a4a;font-style:italic">87</span>
<span class="t" style="right:484.0px;top:301.422px;font-size:6.206px;line-height:7px;transform:scaleX(0.9346);transform-origin:100% 50%;color:#4a4a4a;font-style:italic">74</span>
<span class="t" style="left:543.5px;top:301.479px;font-size:6.367px;line-height:7px;transform:scaleX(0.9346);transform-origin:0 50%;color:#3c3c3c;">Hello world</span>
<div style="left:98px;top:321.8999999999999px;width:529px;height:0.6px;background:rgba(0,0,0,0.085)"></div>
<span class="t" style="left:6px;width:200px;text-align:center;top:312.622px;font-size:6.206px;line-height:7px;transform:scaleX(0.9346);transform-origin:50% 50%;color:#555;">20</span>
<span class="t" style="right:826px;top:312.622px;font-size:6.206px;line-height:7px;transform:scaleX(0.9346);transform-origin:100% 50%;color:#4a4a4a;font-style:italic">2000</span>
<span class="t" style="left:201.5px;top:313.545px;font-size:5.992px;line-height:6px;transform:scaleX(0.9346);transform-origin:0 50%;color:#333;">NL</span>
<span class="t" style="left:287px;top:312.622px;font-size:6.206px;line-height:7px;transform:scaleX(0.9346);transform-origin:0 50%;color:#333;">New York Mets</span>
<span class="t" style="right:569.5px;top:312.622px;font-size:6.206px;line-height:7px;transform:scaleX(0.9346);transform-origin:100% 50%;color:#4a4a4a;font-style:italic">94</span>
<span class="t" style="right:484.0px;top:312.622px;font-size:6.206px;line-height:7px;transform:scaleX(0.9346);transform-origin:100% 50%;color:#4a4a4a;font-style:italic">68</span>
<span class="t" style="left:543.5px;top:312.679px;font-size:6.367px;line-height:7px;transform:scaleX(0.9346);transform-origin:0 50%;color:#3c3c3c;">Hello world</span>
<div style="left:98px;top:333.09999999999997px;width:529px;height:0.6px;background:rgba(0,0,0,0.085)"></div>
<span class="t" style="left:6px;width:200px;text-align:center;top:323.822px;font-size:6.206px;line-height:7px;transform:scaleX(0.9346);transform-origin:50% 50%;color:#555;">21</span>
<span class="t" style="right:826px;top:323.822px;font-size:6.206px;line-height:7px;transform:scaleX(0.9346);transform-origin:100% 50%;color:#4a4a4a;font-style:italic">2000</span>
<span class="t" style="left:201.5px;top:324.745px;font-size:5.992px;line-height:6px;transform:scaleX(0.9346);transform-origin:0 50%;color:#333;">AL</span>
<span class="t" style="left:287px;top:323.822px;font-size:6.206px;line-height:7px;transform:scaleX(0.9346);transform-origin:0 50%;color:#333;">Oakland Athletics</span>
<span class="t" style="right:569.5px;top:323.822px;font-size:6.206px;line-height:7px;transform:scaleX(0.9346);transform-origin:100% 50%;color:#4a4a4a;font-style:italic">91</span>
<span class="t" style="right:484.0px;top:323.822px;font-size:6.206px;line-height:7px;transform:scaleX(0.9346);transform-origin:100% 50%;color:#4a4a4a;font-style:italic">70</span>
<span class="t" style="left:543.5px;top:323.879px;font-size:6.367px;line-height:7px;transform:scaleX(0.9346);transform-origin:0 50%;color:#3c3c3c;">Hello world</span>
<div style="left:98px;top:344.29999999999995px;width:529px;height:0.6px;background:rgba(0,0,0,0.085)"></div>
<span class="t" style="left:6px;width:200px;text-align:center;top:335.022px;font-size:6.206px;line-height:7px;transform:scaleX(0.9346);transform-origin:50% 50%;color:#555;">22</span>
<span class="t" style="right:826px;top:335.022px;font-size:6.206px;line-height:7px;transform:scaleX(0.9346);transform-origin:100% 50%;color:#4a4a4a;font-style:italic">2000</span>
<span class="t" style="left:201.5px;top:335.945px;font-size:5.992px;line-height:6px;transform:scaleX(0.9346);transform-origin:0 50%;color:#333;">NL</span>
<span class="t" style="left:287px;top:335.022px;font-size:6.206px;line-height:7px;transform:scaleX(0.9346);transform-origin:0 50%;color:#333;">Philadelphia Phillies</span>
<span class="t" style="right:569.5px;top:335.022px;font-size:6.206px;line-height:7px;transform:scaleX(0.9346);transform-origin:100% 50%;color:#4a4a4a;font-style:italic">65</span>
<span class="t" style="right:484.0px;top:335.022px;font-size:6.206px;line-height:7px;transform:scaleX(0.9346);transform-origin:100% 50%;color:#4a4a4a;font-style:italic">97</span>
<span class="t" style="left:543.5px;top:335.079px;font-size:6.367px;line-height:7px;transform:scaleX(0.9346);transform-origin:0 50%;color:#3c3c3c;">Hello world</span>
<div style="left:98px;top:355.49999999999994px;width:529px;height:0.6px;background:rgba(0,0,0,0.085)"></div>
<span class="t" style="left:6px;width:200px;text-align:center;top:346.222px;font-size:6.206px;line-height:7px;transform:scaleX(0.9346);transform-origin:50% 50%;color:#555;">23</span>
<span class="t" style="right:826px;top:346.222px;font-size:6.206px;line-height:7px;transform:scaleX(0.9346);transform-origin:100% 50%;color:#4a4a4a;font-style:italic">2000</span>
<span class="t" style="left:201.5px;top:347.145px;font-size:5.992px;line-height:6px;transform:scaleX(0.9346);transform-origin:0 50%;color:#333;">NL</span>
<span class="t" style="left:287px;top:346.222px;font-size:6.206px;line-height:7px;transform:scaleX(0.9346);transform-origin:0 50%;color:#333;">Pittsburgh Pirates</span>
<span class="t" style="right:569.5px;top:346.222px;font-size:6.206px;line-height:7px;transform:scaleX(0.9346);transform-origin:100% 50%;color:#4a4a4a;font-style:italic">69</span>
<span class="t" style="right:484.0px;top:346.222px;font-size:6.206px;line-height:7px;transform:scaleX(0.9346);transform-origin:100% 50%;color:#4a4a4a;font-style:italic">93</span>
<span class="t" style="left:543.5px;top:346.279px;font-size:6.367px;line-height:7px;transform:scaleX(0.9346);transform-origin:0 50%;color:#3c3c3c;">Hello world</span>
<div style="left:98px;top:366.69999999999993px;width:529px;height:0.6px;background:rgba(0,0,0,0.085)"></div>
<span class="t" style="left:6px;width:200px;text-align:center;top:357.422px;font-size:6.206px;line-height:7px;transform:scaleX(0.9346);transform-origin:50% 50%;color:#555;">24</span>
<span class="t" style="right:826px;top:357.422px;font-size:6.206px;line-height:7px;transform:scaleX(0.9346);transform-origin:100% 50%;color:#4a4a4a;font-style:italic">2000</span>
<span class="t" style="left:201.5px;top:358.345px;font-size:5.992px;line-height:6px;transform:scaleX(0.9346);transform-origin:0 50%;color:#333;">NL</span>
<span class="t" style="left:287px;top:357.422px;font-size:6.206px;line-height:7px;transform:scaleX(0.9346);transform-origin:0 50%;color:#333;">San Diego Padres</span>
<span class="t" style="right:569.5px;top:357.422px;font-size:6.206px;line-height:7px;transform:scaleX(0.9346);transform-origin:100% 50%;color:#4a4a4a;font-style:italic">76</span>
<span class="t" style="right:484.0px;top:357.422px;font-size:6.206px;line-height:7px;transform:scaleX(0.9346);transform-origin:100% 50%;color:#4a4a4a;font-style:italic">86</span>
<span class="t" style="left:543.5px;top:357.479px;font-size:6.367px;line-height:7px;transform:scaleX(0.9346);transform-origin:0 50%;color:#3c3c3c;">Hello world</span>
<div style="left:98px;top:377.8999999999999px;width:529px;height:0.6px;background:rgba(0,0,0,0.085)"></div>
<span class="t" style="left:6px;width:200px;text-align:center;top:368.622px;font-size:6.206px;line-height:7px;transform:scaleX(0.9346);transform-origin:50% 50%;color:#555;">25</span>
<span class="t" style="right:826px;top:368.622px;font-size:6.206px;line-height:7px;transform:scaleX(0.9346);transform-origin:100% 50%;color:#4a4a4a;font-style:italic">2000</span>
<span class="t" style="left:201.5px;top:369.545px;font-size:5.992px;line-height:6px;transform:scaleX(0.9346);transform-origin:0 50%;color:#333;">AL</span>
<span class="t" style="left:287px;top:368.622px;font-size:6.206px;line-height:7px;transform:scaleX(0.9346);transform-origin:0 50%;color:#333;">Seattle Mariners</span>
<span class="t" style="right:569.5px;top:368.622px;font-size:6.206px;line-height:7px;transform:scaleX(0.9346);transform-origin:100% 50%;color:#4a4a4a;font-style:italic">91</span>
<span class="t" style="right:484.0px;top:368.622px;font-size:6.206px;line-height:7px;transform:scaleX(0.9346);transform-origin:100% 50%;color:#4a4a4a;font-style:italic">71</span>
<span class="t" style="left:543.5px;top:368.679px;font-size:6.367px;line-height:7px;transform:scaleX(0.9346);transform-origin:0 50%;color:#3c3c3c;">Hello world</span>
<div style="left:98px;top:389.09999999999997px;width:529px;height:0.6px;background:rgba(0,0,0,0.085)"></div>
<span class="t" style="left:6px;width:200px;text-align:center;top:379.822px;font-size:6.206px;line-height:7px;transform:scaleX(0.9346);transform-origin:50% 50%;color:#555;">26</span>
<span class="t" style="right:826px;top:379.822px;font-size:6.206px;line-height:7px;transform:scaleX(0.9346);transform-origin:100% 50%;color:#4a4a4a;font-style:italic">2000</span>
<span class="t" style="left:201.5px;top:380.745px;font-size:5.992px;line-height:6px;transform:scaleX(0.9346);transform-origin:0 50%;color:#333;">NL</span>
<span class="t" style="left:287px;top:379.822px;font-size:6.206px;line-height:7px;transform:scaleX(0.9346);transform-origin:0 50%;color:#333;">San Francisco Giants</span>
<span class="t" style="right:569.5px;top:379.822px;font-size:6.206px;line-height:7px;transform:scaleX(0.9346);transform-origin:100% 50%;color:#4a4a4a;font-style:italic">97</span>
<span class="t" style="right:484.0px;top:379.822px;font-size:6.206px;line-height:7px;transform:scaleX(0.9346);transform-origin:100% 50%;color:#4a4a4a;font-style:italic">65</span>
<span class="t" style="left:543.5px;top:379.879px;font-size:6.367px;line-height:7px;transform:scaleX(0.9346);transform-origin:0 50%;color:#3c3c3c;">Hello world</span>
<div style="left:98px;top:400.29999999999995px;width:529px;height:0.6px;background:rgba(0,0,0,0.085)"></div>
<span class="t" style="left:6px;width:200px;text-align:center;top:391.022px;font-size:6.206px;line-height:7px;transform:scaleX(0.9346);transform-origin:50% 50%;color:#555;">27</span>
<span class="t" style="right:826px;top:391.022px;font-size:6.206px;line-height:7px;transform:scaleX(0.9346);transform-origin:100% 50%;color:#4a4a4a;font-style:italic">2000</span>
<span class="t" style="left:201.5px;top:391.945px;font-size:5.992px;line-height:6px;transform:scaleX(0.9346);transform-origin:0 50%;color:#333;">NL</span>
<span class="t" style="left:287px;top:391.022px;font-size:6.206px;line-height:7px;transform:scaleX(0.9346);transform-origin:0 50%;color:#333;">St. Louis Cardinals</span>
<span class="t" style="right:569.5px;top:391.022px;font-size:6.206px;line-height:7px;transform:scaleX(0.9346);transform-origin:100% 50%;color:#4a4a4a;font-style:italic">95</span>
<span class="t" style="right:484.0px;top:391.022px;font-size:6.206px;line-height:7px;transform:scaleX(0.9346);transform-origin:100% 50%;color:#4a4a4a;font-style:italic">67</span>
<span class="t" style="left:543.5px;top:391.079px;font-size:6.367px;line-height:7px;transform:scaleX(0.9346);transform-origin:0 50%;color:#3c3c3c;">Hello world</span>
<div style="left:98px;top:411.49999999999994px;width:529px;height:0.6px;background:rgba(0,0,0,0.085)"></div>
<span class="t" style="left:6px;width:200px;text-align:center;top:402.222px;font-size:6.206px;line-height:7px;transform:scaleX(0.9346);transform-origin:50% 50%;color:#555;">28</span>
<span class="t" style="right:826px;top:402.222px;font-size:6.206px;line-height:7px;transform:scaleX(0.9346);transform-origin:100% 50%;color:#4a4a4a;font-style:italic">2000</span>
<span class="t" style="left:201.5px;top:403.145px;font-size:5.992px;line-height:6px;transform:scaleX(0.9346);transform-origin:0 50%;color:#333;">AL</span>
<span class="t" style="left:287px;top:402.222px;font-size:6.206px;line-height:7px;transform:scaleX(0.9346);transform-origin:0 50%;color:#333;">Tampa Bay Devil Rays</span>
<span class="t" style="right:569.5px;top:402.222px;font-size:6.206px;line-height:7px;transform:scaleX(0.9346);transform-origin:100% 50%;color:#4a4a4a;font-style:italic">69</span>
<span class="t" style="right:484.0px;top:402.222px;font-size:6.206px;line-height:7px;transform:scaleX(0.9346);transform-origin:100% 50%;color:#4a4a4a;font-style:italic">92</span>
<span class="t" style="left:543.5px;top:402.279px;font-size:6.367px;line-height:7px;transform:scaleX(0.9346);transform-origin:0 50%;color:#3c3c3c;">Hello world</span>
<div style="left:98px;top:422.69999999999993px;width:529px;height:0.6px;background:rgba(0,0,0,0.085)"></div>
<span class="t" style="left:6px;width:200px;text-align:center;top:413.422px;font-size:6.206px;line-height:7px;transform:scaleX(0.9346);transform-origin:50% 50%;color:#555;">29</span>
<span class="t" style="right:826px;top:413.422px;font-size:6.206px;line-height:7px;transform:scaleX(0.9346);transform-origin:100% 50%;color:#4a4a4a;font-style:italic">2000</span>
<span class="t" style="left:201.5px;top:414.345px;font-size:5.992px;line-height:6px;transform:scaleX(0.9346);transform-origin:0 50%;color:#333;">AL</span>
<span class="t" style="left:287px;top:413.422px;font-size:6.206px;line-height:7px;transform:scaleX(0.9346);transform-origin:0 50%;color:#333;">Texas Rangers</span>
<span class="t" style="right:569.5px;top:413.422px;font-size:6.206px;line-height:7px;transform:scaleX(0.9346);transform-origin:100% 50%;color:#4a4a4a;font-style:italic">71</span>
<span class="t" style="right:484.0px;top:413.422px;font-size:6.206px;line-height:7px;transform:scaleX(0.9346);transform-origin:100% 50%;color:#4a4a4a;font-style:italic">91</span>
<span class="t" style="left:543.5px;top:413.479px;font-size:6.367px;line-height:7px;transform:scaleX(0.9346);transform-origin:0 50%;color:#3c3c3c;">Hello world</span>
<div style="left:98px;top:433.8999999999999px;width:529px;height:0.6px;background:rgba(0,0,0,0.085)"></div>
<span class="t" style="left:6px;width:200px;text-align:center;top:424.622px;font-size:6.206px;line-height:7px;transform:scaleX(0.9346);transform-origin:50% 50%;color:#555;">30</span>
<span class="t" style="right:826px;top:424.622px;font-size:6.206px;line-height:7px;transform:scaleX(0.9346);transform-origin:100% 50%;color:#4a4a4a;font-style:italic">2000</span>
<span class="t" style="left:201.5px;top:425.545px;font-size:5.992px;line-height:6px;transform:scaleX(0.9346);transform-origin:0 50%;color:#333;">AL</span>
<span class="t" style="left:287px;top:424.622px;font-size:6.206px;line-height:7px;transform:scaleX(0.9346);transform-origin:0 50%;color:#333;">Toronto Blue Jays</span>
<span class="t" style="right:569.5px;top:424.622px;font-size:6.206px;line-height:7px;transform:scaleX(0.9346);transform-origin:100% 50%;color:#4a4a4a;font-style:italic">83</span>
<span class="t" style="right:484.0px;top:424.622px;font-size:6.206px;line-height:7px;transform:scaleX(0.9346);transform-origin:100% 50%;color:#4a4a4a;font-style:italic">79</span>
<span class="t" style="left:543.5px;top:424.679px;font-size:6.367px;line-height:7px;transform:scaleX(0.9346);transform-origin:0 50%;color:#3c3c3c;">Hello world</span>
<div style="left:98px;top:445.09999999999997px;width:529px;height:0.6px;background:rgba(0,0,0,0.085)"></div>
<span class="t" style="left:6px;width:200px;text-align:center;top:435.822px;font-size:6.206px;line-height:7px;transform:scaleX(0.9346);transform-origin:50% 50%;color:#555;">31</span>
<span class="t" style="right:826px;top:435.822px;font-size:6.206px;line-height:7px;transform:scaleX(0.9346);transform-origin:100% 50%;color:#4a4a4a;font-style:italic">2001</span>
<span class="t" style="left:201.5px;top:436.745px;font-size:5.992px;line-height:6px;transform:scaleX(0.9346);transform-origin:0 50%;color:#333;">AL</span>
<span class="t" style="left:287px;top:435.822px;font-size:6.206px;line-height:7px;transform:scaleX(0.9346);transform-origin:0 50%;color:#333;">Anaheim Angels</span>
<span class="t" style="right:569.5px;top:435.822px;font-size:6.206px;line-height:7px;transform:scaleX(0.9346);transform-origin:100% 50%;color:#4a4a4a;font-style:italic">75</span>
<span class="t" style="right:484.0px;top:435.822px;font-size:6.206px;line-height:7px;transform:scaleX(0.9346);transform-origin:100% 50%;color:#4a4a4a;font-style:italic">87</span>
<span class="t" style="left:543.5px;top:435.879px;font-size:6.367px;line-height:7px;transform:scaleX(0.9346);transform-origin:0 50%;color:#3c3c3c;">Hello world</span>
<div style="left:98px;top:456.29999999999995px;width:529px;height:0.6px;background:rgba(0,0,0,0.085)"></div>
<span class="t" style="left:6px;width:200px;text-align:center;top:447.022px;font-size:6.206px;line-height:7px;transform:scaleX(0.9346);transform-origin:50% 50%;color:#555;">32</span>
<span class="t" style="right:826px;top:447.022px;font-size:6.206px;line-height:7px;transform:scaleX(0.9346);transform-origin:100% 50%;color:#4a4a4a;font-style:italic">2001</span>
<span class="t" style="left:201.5px;top:447.945px;font-size:5.992px;line-height:6px;transform:scaleX(0.9346);transform-origin:0 50%;color:#333;">NL</span>
<span class="t" style="left:287px;top:447.022px;font-size:6.206px;line-height:7px;transform:scaleX(0.9346);transform-origin:0 50%;color:#333;">Arizona Diamondbacks</span>
<span class="t" style="right:569.5px;top:447.022px;font-size:6.206px;line-height:7px;transform:scaleX(0.9346);transform-origin:100% 50%;color:#4a4a4a;font-style:italic">92</span>
<span class="t" style="right:484.0px;top:447.022px;font-size:6.206px;line-height:7px;transform:scaleX(0.9346);transform-origin:100% 50%;color:#4a4a4a;font-style:italic">70</span>
<span class="t" style="left:543.5px;top:447.079px;font-size:6.367px;line-height:7px;transform:scaleX(0.9346);transform-origin:0 50%;color:#3c3c3c;">Hello world</span>
<div style="left:98px;top:467.49999999999994px;width:529px;height:0.6px;background:rgba(0,0,0,0.085)"></div>
<span class="t" style="left:6px;width:200px;text-align:center;top:458.222px;font-size:6.206px;line-height:7px;transform:scaleX(0.9346);transform-origin:50% 50%;color:#555;">33</span>
<span class="t" style="right:826px;top:458.222px;font-size:6.206px;line-height:7px;transform:scaleX(0.9346);transform-origin:100% 50%;color:#4a4a4a;font-style:italic">2001</span>
<span class="t" style="left:201.5px;top:459.145px;font-size:5.992px;line-height:6px;transform:scaleX(0.9346);transform-origin:0 50%;color:#333;">NL</span>
<span class="t" style="left:287px;top:458.222px;font-size:6.206px;line-height:7px;transform:scaleX(0.9346);transform-origin:0 50%;color:#333;">Atlanta Braves</span>
<span class="t" style="right:569.5px;top:458.222px;font-size:6.206px;line-height:7px;transform:scaleX(0.9346);transform-origin:100% 50%;color:#4a4a4a;font-style:italic">88</span>
<span class="t" style="right:484.0px;top:458.222px;font-size:6.206px;line-height:7px;transform:scaleX(0.9346);transform-origin:100% 50%;color:#4a4a4a;font-style:italic">74</span>
<span class="t" style="left:543.5px;top:458.279px;font-size:6.367px;line-height:7px;transform:scaleX(0.9346);transform-origin:0 50%;color:#3c3c3c;">Hello world</span>
<div style="left:98px;top:478.69999999999993px;width:529px;height:0.6px;background:rgba(0,0,0,0.085)"></div>
<span class="t" style="left:6px;width:200px;text-align:center;top:469.422px;font-size:6.206px;line-height:7px;transform:scaleX(0.9346);transform-origin:50% 50%;color:#555;">34</span>
<span class="t" style="right:826px;top:469.422px;font-size:6.206px;line-height:7px;transform:scaleX(0.9346);transform-origin:100% 50%;color:#4a4a4a;font-style:italic">2001</span>
<span class="t" style="left:201.5px;top:470.345px;font-size:5.992px;line-height:6px;transform:scaleX(0.9346);transform-origin:0 50%;color:#333;">AL</span>
<span class="t" style="left:287px;top:469.422px;font-size:6.206px;line-height:7px;transform:scaleX(0.9346);transform-origin:0 50%;color:#333;">Baltimore Orioles</span>
<span class="t" style="right:569.5px;top:469.422px;font-size:6.206px;line-height:7px;transform:scaleX(0.9346);transform-origin:100% 50%;color:#4a4a4a;font-style:italic">63</span>
<span class="t" style="right:484.0px;top:469.422px;font-size:6.206px;line-height:7px;transform:scaleX(0.9346);transform-origin:100% 50%;color:#4a4a4a;font-style:italic">98</span>
<span class="t" style="left:543.5px;top:469.479px;font-size:6.367px;line-height:7px;transform:scaleX(0.9346);transform-origin:0 50%;color:#3c3c3c;">Hello world</span>
<div style="left:98px;top:489.8999999999999px;width:529px;height:0.6px;background:rgba(0,0,0,0.085)"></div>
<span class="t" style="left:6px;width:200px;text-align:center;top:480.622px;font-size:6.206px;line-height:7px;transform:scaleX(0.9346);transform-origin:50% 50%;color:#555;">35</span>
<span class="t" style="right:826px;top:480.622px;font-size:6.206px;line-height:7px;transform:scaleX(0.9346);transform-origin:100% 50%;color:#4a4a4a;font-style:italic">2001</span>
<span class="t" style="left:201.5px;top:481.545px;font-size:5.992px;line-height:6px;transform:scaleX(0.9346);transform-origin:0 50%;color:#333;">AL</span>
<span class="t" style="left:287px;top:480.622px;font-size:6.206px;line-height:7px;transform:scaleX(0.9346);transform-origin:0 50%;color:#333;">Boston Red Sox</span>
<span class="t" style="right:569.5px;top:480.622px;font-size:6.206px;line-height:7px;transform:scaleX(0.9346);transform-origin:100% 50%;color:#4a4a4a;font-style:italic">82</span>
<span class="t" style="right:484.0px;top:480.622px;font-size:6.206px;line-height:7px;transform:scaleX(0.9346);transform-origin:100% 50%;color:#4a4a4a;font-style:italic">79</span>
<span class="t" style="left:543.5px;top:480.679px;font-size:6.367px;line-height:7px;transform:scaleX(0.9346);transform-origin:0 50%;color:#3c3c3c;">Hello world</span>
<div style="left:98px;top:501.09999999999997px;width:529px;height:0.6px;background:rgba(0,0,0,0.085)"></div>
<span class="t" style="left:6px;width:200px;text-align:center;top:491.822px;font-size:6.206px;line-height:7px;transform:scaleX(0.9346);transform-origin:50% 50%;color:#555;">36</span>
<span class="t" style="right:826px;top:491.822px;font-size:6.206px;line-height:7px;transform:scaleX(0.9346);transform-origin:100% 50%;color:#4a4a4a;font-style:italic">2001</span>
<span class="t" style="left:201.5px;top:492.745px;font-size:5.992px;line-height:6px;transform:scaleX(0.9346);transform-origin:0 50%;color:#333;">AL</span>
<span class="t" style="left:287px;top:491.822px;font-size:6.206px;line-height:7px;transform:scaleX(0.9346);transform-origin:0 50%;color:#333;">Chicago White Sox</span>
<span class="t" style="right:569.5px;top:491.822px;font-size:6.206px;line-height:7px;transform:scaleX(0.9346);transform-origin:100% 50%;color:#4a4a4a;font-style:italic">83</span>
<span class="t" style="right:484.0px;top:491.822px;font-size:6.206px;line-height:7px;transform:scaleX(0.9346);transform-origin:100% 50%;color:#4a4a4a;font-style:italic">79</span>
<span class="t" style="left:543.5px;top:491.879px;font-size:6.367px;line-height:7px;transform:scaleX(0.9346);transform-origin:0 50%;color:#3c3c3c;">Hello world</span>
<div style="left:98px;top:512.3px;width:529px;height:0.6px;background:rgba(0,0,0,0.085)"></div>
<span class="t" style="left:6px;width:200px;text-align:center;top:503.022px;font-size:6.206px;line-height:7px;transform:scaleX(0.9346);transform-origin:50% 50%;color:#555;">37</span>
<span class="t" style="right:826px;top:503.022px;font-size:6.206px;line-height:7px;transform:scaleX(0.9346);transform-origin:100% 50%;color:#4a4a4a;font-style:italic">2001</span>
<span class="t" style="left:201.5px;top:503.945px;font-size:5.992px;line-height:6px;transform:scaleX(0.9346);transform-origin:0 50%;color:#333;">NL</span>
<span class="t" style="left:287px;top:503.022px;font-size:6.206px;line-height:7px;transform:scaleX(0.9346);transform-origin:0 50%;color:#333;">Chicago Cubs</span>
<span class="t" style="right:569.5px;top:503.022px;font-size:6.206px;line-height:7px;transform:scaleX(0.9346);transform-origin:100% 50%;color:#4a4a4a;font-style:italic">88</span>
<span class="t" style="right:484.0px;top:503.022px;font-size:6.206px;line-height:7px;transform:scaleX(0.9346);transform-origin:100% 50%;color:#4a4a4a;font-style:italic">74</span>
<span class="t" style="left:543.5px;top:503.079px;font-size:6.367px;line-height:7px;transform:scaleX(0.9346);transform-origin:0 50%;color:#3c3c3c;">Hello world</span>
<div style="left:98px;top:523.5px;width:529px;height:0.6px;background:rgba(0,0,0,0.085)"></div>
<span class="t" style="left:6px;width:200px;text-align:center;top:514.222px;font-size:6.206px;line-height:7px;transform:scaleX(0.9346);transform-origin:50% 50%;color:#555;">38</span>
<span class="t" style="right:826px;top:514.222px;font-size:6.206px;line-height:7px;transform:scaleX(0.9346);transform-origin:100% 50%;color:#4a4a4a;font-style:italic">2001</span>
<span class="t" style="left:201.5px;top:515.145px;font-size:5.992px;line-height:6px;transform:scaleX(0.9346);transform-origin:0 50%;color:#333;">NL</span>
<span class="t" style="left:287px;top:514.222px;font-size:6.206px;line-height:7px;transform:scaleX(0.9346);transform-origin:0 50%;color:#333;">Cincinnati Reds</span>
<span class="t" style="right:569.5px;top:514.222px;font-size:6.206px;line-height:7px;transform:scaleX(0.9346);transform-origin:100% 50%;color:#4a4a4a;font-style:italic">66</span>
<span class="t" style="right:484.0px;top:514.222px;font-size:6.206px;line-height:7px;transform:scaleX(0.9346);transform-origin:100% 50%;color:#4a4a4a;font-style:italic">96</span>
<span class="t" style="left:543.5px;top:514.279px;font-size:6.367px;line-height:7px;transform:scaleX(0.9346);transform-origin:0 50%;color:#3c3c3c;">Hello world</span>
<div style="left:98px;top:534.6999999999999px;width:529px;height:0.6px;background:rgba(0,0,0,0.085)"></div>
<span class="t" style="left:6px;width:200px;text-align:center;top:525.422px;font-size:6.206px;line-height:7px;transform:scaleX(0.9346);transform-origin:50% 50%;color:#555;">39</span>
<span class="t" style="right:826px;top:525.422px;font-size:6.206px;line-height:7px;transform:scaleX(0.9346);transform-origin:100% 50%;color:#4a4a4a;font-style:italic">2001</span>
<span class="t" style="left:201.5px;top:526.345px;font-size:5.992px;line-height:6px;transform:scaleX(0.9346);transform-origin:0 50%;color:#333;">AL</span>
<span class="t" style="left:287px;top:525.422px;font-size:6.206px;line-height:7px;transform:scaleX(0.9346);transform-origin:0 50%;color:#333;">Cleveland Indians</span>
<span class="t" style="right:569.5px;top:525.422px;font-size:6.206px;line-height:7px;transform:scaleX(0.9346);transform-origin:100% 50%;color:#4a4a4a;font-style:italic">91</span>
<span class="t" style="right:484.0px;top:525.422px;font-size:6.206px;line-height:7px;transform:scaleX(0.9346);transform-origin:100% 50%;color:#4a4a4a;font-style:italic">71</span>
<span class="t" style="left:543.5px;top:525.479px;font-size:6.367px;line-height:7px;transform:scaleX(0.9346);transform-origin:0 50%;color:#3c3c3c;">Hello world</span>
<div style="left:98px;top:545.9px;width:529px;height:0.6px;background:rgba(0,0,0,0.085)"></div>
<span class="t" style="left:6px;width:200px;text-align:center;top:536.622px;font-size:6.206px;line-height:7px;transform:scaleX(0.9346);transform-origin:50% 50%;color:#555;">40</span>
<span class="t" style="right:826px;top:536.622px;font-size:6.206px;line-height:7px;transform:scaleX(0.9346);transform-origin:100% 50%;color:#4a4a4a;font-style:italic">2001</span>
<span class="t" style="left:201.5px;top:537.545px;font-size:5.992px;line-height:6px;transform:scaleX(0.9346);transform-origin:0 50%;color:#333;">NL</span>
<span class="t" style="left:287px;top:536.622px;font-size:6.206px;line-height:7px;transform:scaleX(0.9346);transform-origin:0 50%;color:#333;">Colorado Rockies</span>
<span class="t" style="right:569.5px;top:536.622px;font-size:6.206px;line-height:7px;transform:scaleX(0.9346);transform-origin:100% 50%;color:#4a4a4a;font-style:italic">73</span>
<span class="t" style="right:484.0px;top:536.622px;font-size:6.206px;line-height:7px;transform:scaleX(0.9346);transform-origin:100% 50%;color:#4a4a4a;font-style:italic">89</span>
<span class="t" style="left:543.5px;top:536.679px;font-size:6.367px;line-height:7px;transform:scaleX(0.9346);transform-origin:0 50%;color:#3c3c3c;">Hello world</span>
<div style="left:872.8px;top:98px;width:8.6px;height:437px;background:#f0f0f0"></div>
<div style="left:872.8px;top:116px;width:8.6px;height:319.5px;background:#cbcbcb"></div>
<svg style="position:absolute;left:874px;top:107px" width="7" height="5" viewBox="0 0 7 5"><path d="M0.6 4L3.3 1L6 4" fill="none" stroke="#555" stroke-width="0.9"/></svg>
<svg style="position:absolute;left:874px;top:526px" width="7" height="5" viewBox="0 0 7 5"><path d="M0.6 1L3.3 4L6 1" fill="none" stroke="#555" stroke-width="0.9"/></svg>
<div style="left:884.2px;top:76.5px;width:0.8px;height:462.5px;background:#e3e3e3"></div>
<div style="left:885px;top:76.5px;width:139px;height:462.5px;background:#fdfdfd"></div>
<span class="t" style="left:892px;top:86.338px;font-size:11px;line-height:12px;color:#5fa288;-webkit-text-stroke:0;transform:scaleX(0.893);transform-origin:0 0">Query Settings</span>
<svg style="position:absolute;left:1005px;top:91px" width="7" height="6" viewBox="0 0 7 6"><path d="M0.5 0.3L6.5 5.7M6.5 0.3L0.5 5.7" stroke="#777" stroke-width="0.7"/></svg>
<svg style="position:absolute;left:890px;top:110.5px" width="4" height="4" viewBox="0 0 4 4"><path d="M3.6 0.3V3.6H0.3z" fill="#444"/></svg>
<span class="t" style="left:897px;top:108.803px;font-size:6.153px;line-height:7px;transform:scaleX(0.9346);transform-origin:0 50%;color:#217346;font-weight:bold">PROPERTIES</span>
<span class="t" style="left:897px;top:120.098px;font-size:6.420px;line-height:7px;transform:scaleX(0.9346);transform-origin:0 50%;color:#444;">Name</span>
<div style="left:897px;top:128.4px;width:116.3px;height:11.3px;background:#fff;border:0.7px solid #cfcfcf;box-sizing:border-box"></div>
<span class="t" style="left:900px;top:130.260px;font-size:6.313px;line-height:7px;transform:scaleX(0.9346);transform-origin:0 50%;color:#777;">teams</span>
<span class="t" style="left:897px;top:144.975px;font-size:6.634px;line-height:7px;transform:scaleX(0.9346);transform-origin:0 50%;color:#2f6098;">All Properties</span>
<svg style="position:absolute;left:890px;top:164.5px" width="4" height="4" viewBox="0 0 4 4"><path d="M3.6 0.3V3.6H0.3z" fill="#444"/></svg>
<span class="t" style="left:897px;top:162.703px;font-size:6.153px;line-height:7px;transform:scaleX(0.9346);transform-origin:0 50%;color:#217346;font-weight:bold">APPLIED STEPS</span>
<div style="left:897px;top:174px;width:116.8px;height:353.7px;background:#fff;border:0.7px solid #dcdcdc;box-sizing:border-box"></div>
<span class="t" style="left:908px;top:176.713px;font-size:6.741px;line-height:7px;transform:scaleX(0.9346);transform-origin:0 50%;color:#444;">Source</span>
<span class="t" style="left:908px;top:187.313px;font-size:6.741px;line-height:7px;transform:scaleX(0.9346);transform-origin:0 50%;color:#444;">Changed Type</span>
<div style="left:897.5px;top:196px;width:116px;height:10.3px;background:#d1ecdf"></div>
<svg style="position:absolute;left:900px;top:199px" width="5" height="5" viewBox="0 0 5 5"><path d="M0.4 0.4L4.4 4.4M4.4 0.4L0.4 4.4" stroke="#555" stroke-width="0.6"/></svg>
<span class="t" style="left:908px;top:197.832px;font-size:6.795px;line-height:7px;transform:scaleX(0.9346);transform-origin:0 50%;color:#444;">Added Custom</span>
<svg style="position:absolute;left:1003px;top:198px" width="7" height="7" viewBox="0 0 7 7"><circle cx="3.5" cy="3.5" r="2.3" fill="none" stroke="#9a9a9a" stroke-width="1.1" stroke-dasharray="0.9 0.45"/><circle cx="3.5" cy="3.5" r="1.2" fill="#d1ecdf" stroke="#9a9a9a" stroke-width="0.5"/></svg>
<div style="left:0px;top:539.3px;width:1024px;height:9.7px;background:#217346"></div>
<span class="t" style="left:3px;top:542.807px;font-size:5.885px;line-height:6px;transform:scaleX(0.9346);transform-origin:0 50%;color:#fff;">6 COLUMNS, 690 ROWS</span>
<span class="t" style="left:75px;top:541.960px;font-size:6.313px;line-height:7px;transform:scaleX(0.9346);transform-origin:0 50%;color:#fff;">Column profiling based on top 1000 rows</span>
<span class="t" style="right:1px;top:542.845px;font-size:5.992px;line-height:6px;transform:scaleX(0.9346);transform-origin:100% 50%;color:#fff;">PREVIEW DOWNLOADED AT 8:49 AM</span>
<div style="left:327px;top:158.5px;width:373px;height:233.5px;background:#fdfdfd;border:0.6px solid #dadada;border-radius:3px;box-sizing:border-box;box-shadow:0 1px 3px rgba(0,0,0,0.12),2px 8px 24px rgba(0,0,0,0.22)"></div>
<svg style="position:absolute;left:688px;top:162.5px" width="7" height="6" viewBox="0 0 7 6"><path d="M0.4 0.3L6.2 5.7M6.2 0.3L0.4 5.7" stroke="#666" stroke-width="0.7"/></svg>
<span class="t" style="left:342px;top:174.795px;font-size:10.6px;line-height:12px;color:#5fa288;-webkit-text-stroke:0;transform:scaleX(0.953);transform-origin:0 0">Custom Column</span>
<span class="t" style="left:342px;top:192.101px;font-size:7.543px;line-height:9px;transform:scaleX(0.9346);transform-origin:0 50%;color:#444;">Add a column that is computed from the other columns.</span>
<span class="t" style="left:342px;top:208.732px;font-size:6.795px;line-height:7px;transform:scaleX(0.9346);transform-origin:0 50%;color:#444;">New column name</span>
<div style="left:342px;top:217.2px;width:226.5px;height:11.7px;background:#fff;border:0.7px solid #c9c9c9;box-sizing:border-box"></div>
<span class="t" style="left:345px;top:219.528px;font-size:7.062px;line-height:7px;transform:scaleX(0.9346);transform-origin:0 50%;color:#333;">Wpct</span>
<span class="t" style="left:342px;top:233.132px;font-size:6.795px;line-height:7px;transform:scaleX(0.9346);transform-origin:0 50%;color:#444;">Custom column formula</span>
<svg style="position:absolute;left:413px;top:233px" width="8" height="8" viewBox="0 0 8 8"><circle cx="3.7" cy="3.7" r="3.2" fill="none" stroke="#555" stroke-width="0.6"/><path d="M3.7 3v2.6M3.7 1.8v0.6" stroke="#555" stroke-width="0.6"/></svg>
<div style="left:342px;top:241.8px;width:227.6px;height:97.4px;background:#fff;border:0.7px solid #d2d2d2;box-sizing:border-box"></div>
<div style="left:561.5px;top:242px;width:0.6px;height:96px;background:#ececec"></div>
<div style="left:562px;top:242.6px;width:7px;height:1.1px;background:#555"></div>
<span class="t" style="left:345px;top:244.407px;font-size:5.885px;line-height:6px;transform:scaleX(0.9346);transform-origin:0 50%;color:#555;">=</span>
<span class="t" style="left:576px;top:232.832px;font-size:6.795px;line-height:7px;transform:scaleX(0.9346);transform-origin:0 50%;color:#444;">Available columns</span>
<div style="left:575.7px;top:241.3px;width:108.2px;height:80.6px;background:#fff;border:0.7px solid #a9dcc5;box-sizing:border-box"></div>
<div style="left:576.4px;top:263.3px;width:106.8px;height:10.7px;background:#e6f3ec"></div>
<div style="left:576.4px;top:274px;width:106.8px;height:10.4px;background:#cfeadc"></div>
<span class="t" style="left:579px;top:244.432px;font-size:6.795px;line-height:7px;transform:scaleX(0.9346);transform-origin:0 50%;color:#444;">year</span>
<span class="t" style="left:579px;top:255.082px;font-size:6.795px;line-height:7px;transform:scaleX(0.9346);transform-origin:0 50%;color:#444;">league</span>
<span class="t" style="left:579px;top:265.732px;font-size:6.795px;line-height:7px;transform:scaleX(0.9346);transform-origin:0 50%;color:#444;">name</span>
<span class="t" style="left:579px;top:276.382px;font-size:6.795px;line-height:7px;transform:scaleX(0.9346);transform-origin:0 50%;color:#444;">W</span>
<span class="t" style="left:579px;top:287.032px;font-size:6.795px;line-height:7px;transform:scaleX(0.9346);transform-origin:0 50%;color:#444;">L</span>
<svg style="position:absolute;left:608.5px;top:273px" width="11" height="15" viewBox="0 0 11 15"><path d="M2.5 1 L1 11.2 L3.8 9.4 L5.2 13.6 L6.9 13 L5.6 8.9 L8.8 8.3 Z" fill="#fff" stroke="#666" stroke-width="0.75"/></svg>
<div style="left:576px;top:327.7px;width:108px;height:11.4px;background:#fff;border:0.7px solid #cfcfcf;box-sizing:border-box"></div>
<span class="t" style="left:530px;width:200px;text-align:center;top:330.545px;font-size:5.992px;line-height:6px;transform:scaleX(0.9346);transform-origin:50% 50%;color:#444;">&lt;&lt; Insert</span>
<span class="t" style="left:342px;top:341.032px;font-size:6.795px;line-height:7px;transform:scaleX(0.9346);transform-origin:0 50%;color:#2f6098;">Learn about Power Query formulas</span>
<svg style="position:absolute;left:343.3px;top:367.6px" width="8" height="8" viewBox="0 0 8 8"><path d="M4 0.3L7.7 4L4 7.7L0.3 4z" fill="#f2c34a"/><path d="M4 1.9V6.1" stroke="#555" stroke-width="0.9"/></svg>
<span class="t" style="left:354px;top:367.681px;font-size:7.490px;line-height:9px;transform:scaleX(0.9346);transform-origin:0 50%;color:#444;">The formula is incomplete.</span>
<div style="left:612.4px;top:365.2px;width:32.2px;height:11.8px;background:#fdfdfd;border:0.7px solid #e6e6e6;box-sizing:border-box"></div>
<span class="t" style="left:528.5px;width:200px;text-align:center;top:367.322px;font-size:6.206px;line-height:7px;transform:scaleX(0.9346);transform-origin:50% 50%;color:#b0b0b0;">OK</span>
<div style="left:651.6px;top:365.2px;width:32.2px;height:11.8px;background:#fff;border:0.7px solid #cfcfcf;box-sizing:border-box"></div>
<span class="t" style="left:567.7px;width:200px;text-align:center;top:367.322px;font-size:6.206px;line-height:7px;transform:scaleX(0.9346);transform-origin:50% 50%;color:#444;">Cancel</span>
</div></body></html>
